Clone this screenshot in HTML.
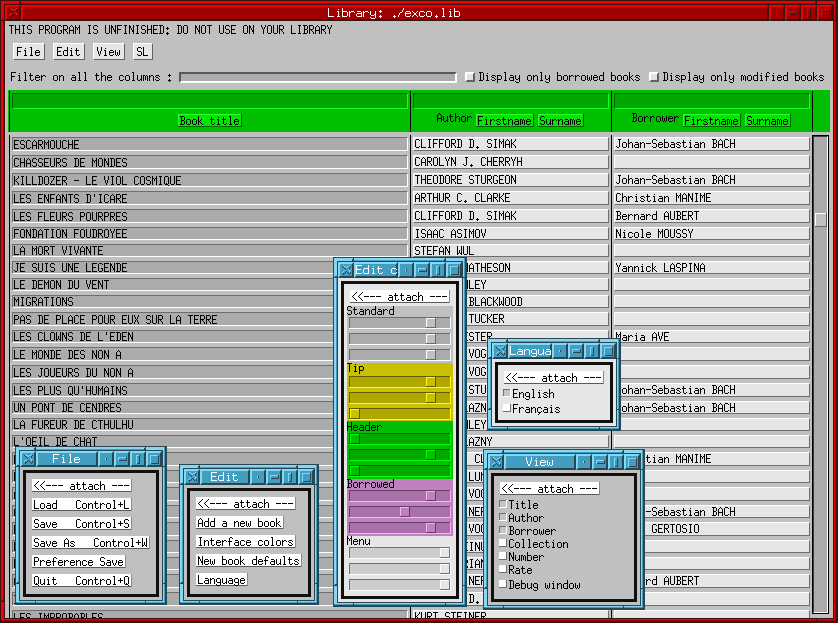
<!DOCTYPE html>
<html lang="en"><head><meta charset="utf-8"><title>Library: ./exco.lib</title>
<style>
html,body{margin:0;padding:0}
body{width:838px;height:623px;overflow:hidden;position:relative;background:#c0c0c0;font-family:"Liberation Mono",monospace}
#root{position:absolute;left:0;top:0;width:838px;height:623px;overflow:hidden}
#root div,#root span,#root svg{position:absolute}
.t{height:13px;font:10px/13px "Liberation Mono",monospace;white-space:pre;overflow:hidden;color:transparent;fill:#000}
.t7{font-size:11.666px}
.t svg{left:0;top:0;shape-rendering:crispEdges}
.w{fill:#fff}
.clip{overflow:hidden}
.win{width:0;height:0}
</style></head>
<body>
<svg width="0" height="0" style="position:absolute"><defs><path id="a39" d="M2 2h1v1h-1zM2 3h1v1h-1zM2 4h1v1h-1z"/><path id="a43" d="M2 4h1v1h-1zM2 5h1v1h-1zM0 6h5v1h-5zM2 7h1v1h-1zM2 8h1v1h-1z"/><path id="a45" d="M0 6h5v1h-5z"/><path id="a46" d="M2 9h1v1h-1zM1 10h3v1h-3zM2 11h1v1h-1z"/><path id="a58" d="M2 4h1v1h-1zM1 5h3v1h-3zM2 6h1v1h-1zM2 9h1v1h-1zM1 10h3v1h-3zM2 11h1v1h-1z"/><path id="a60" d="M4 2h1v1h-1zM3 3h1v1h-1zM2 4h1v1h-1zM1 5h1v1h-1zM0 6h1v1h-1zM1 7h1v1h-1zM2 8h1v1h-1zM3 9h1v1h-1zM4 10h1v1h-1z"/><path id="a65" d="M2 2h1v1h-1zM1 3h1v1h-1zM3 3h1v1h-1zM0 4h1v1h-1zM4 4h1v1h-1zM0 5h1v1h-1zM4 5h1v1h-1zM0 6h1v1h-1zM4 6h1v1h-1zM0 7h5v1h-5zM0 8h1v1h-1zM4 8h1v1h-1zM0 9h1v1h-1zM4 9h1v1h-1zM0 10h1v1h-1zM4 10h1v1h-1z"/><path id="a66" d="M0 2h4v1h-4zM1 3h1v1h-1zM4 3h1v1h-1zM1 4h1v1h-1zM4 4h1v1h-1zM1 5h1v1h-1zM4 5h1v1h-1zM1 6h3v1h-3zM1 7h1v1h-1zM4 7h1v1h-1zM1 8h1v1h-1zM4 8h1v1h-1zM1 9h1v1h-1zM4 9h1v1h-1zM0 10h4v1h-4z"/><path id="a67" d="M1 2h3v1h-3zM0 3h1v1h-1zM4 3h1v1h-1zM0 4h1v1h-1zM0 5h1v1h-1zM0 6h1v1h-1zM0 7h1v1h-1zM0 8h1v1h-1zM0 9h1v1h-1zM4 9h1v1h-1zM1 10h3v1h-3z"/><path id="a68" d="M0 2h4v1h-4zM1 3h1v1h-1zM4 3h1v1h-1zM1 4h1v1h-1zM4 4h1v1h-1zM1 5h1v1h-1zM4 5h1v1h-1zM1 6h1v1h-1zM4 6h1v1h-1zM1 7h1v1h-1zM4 7h1v1h-1zM1 8h1v1h-1zM4 8h1v1h-1zM1 9h1v1h-1zM4 9h1v1h-1zM0 10h4v1h-4z"/><path id="a69" d="M0 2h5v1h-5zM0 3h1v1h-1zM0 4h1v1h-1zM0 5h1v1h-1zM0 6h4v1h-4zM0 7h1v1h-1zM0 8h1v1h-1zM0 9h1v1h-1zM0 10h5v1h-5z"/><path id="a70" d="M0 2h5v1h-5zM0 3h1v1h-1zM0 4h1v1h-1zM0 5h1v1h-1zM0 6h4v1h-4zM0 7h1v1h-1zM0 8h1v1h-1zM0 9h1v1h-1zM0 10h1v1h-1z"/><path id="a71" d="M1 2h3v1h-3zM0 3h1v1h-1zM4 3h1v1h-1zM0 4h1v1h-1zM0 5h1v1h-1zM0 6h1v1h-1zM0 7h1v1h-1zM3 7h2v1h-2zM0 8h1v1h-1zM4 8h1v1h-1zM0 9h1v1h-1zM4 9h1v1h-1zM1 10h3v1h-3z"/><path id="a72" d="M0 2h1v1h-1zM4 2h1v1h-1zM0 3h1v1h-1zM4 3h1v1h-1zM0 4h1v1h-1zM4 4h1v1h-1zM0 5h1v1h-1zM4 5h1v1h-1zM0 6h5v1h-5zM0 7h1v1h-1zM4 7h1v1h-1zM0 8h1v1h-1zM4 8h1v1h-1zM0 9h1v1h-1zM4 9h1v1h-1zM0 10h1v1h-1zM4 10h1v1h-1z"/><path id="a73" d="M1 2h3v1h-3zM2 3h1v1h-1zM2 4h1v1h-1zM2 5h1v1h-1zM2 6h1v1h-1zM2 7h1v1h-1zM2 8h1v1h-1zM2 9h1v1h-1zM1 10h3v1h-3z"/><path id="a74" d="M2 2h3v1h-3zM3 3h1v1h-1zM3 4h1v1h-1zM3 5h1v1h-1zM3 6h1v1h-1zM3 7h1v1h-1zM3 8h1v1h-1zM0 9h1v1h-1zM3 9h1v1h-1zM1 10h2v1h-2z"/><path id="a75" d="M0 2h1v1h-1zM4 2h1v1h-1zM0 3h1v1h-1zM4 3h1v1h-1zM0 4h1v1h-1zM3 4h1v1h-1zM0 5h1v1h-1zM2 5h1v1h-1zM0 6h2v1h-2zM0 7h1v1h-1zM2 7h1v1h-1zM0 8h1v1h-1zM3 8h1v1h-1zM0 9h1v1h-1zM4 9h1v1h-1zM0 10h1v1h-1zM4 10h1v1h-1z"/><path id="a76" d="M0 2h1v1h-1zM0 3h1v1h-1zM0 4h1v1h-1zM0 5h1v1h-1zM0 6h1v1h-1zM0 7h1v1h-1zM0 8h1v1h-1zM0 9h1v1h-1zM0 10h5v1h-5z"/><path id="a77" d="M0 2h1v1h-1zM4 2h1v1h-1zM0 3h1v1h-1zM4 3h1v1h-1zM0 4h2v1h-2zM3 4h2v1h-2zM0 5h1v1h-1zM2 5h1v1h-1zM4 5h1v1h-1zM0 6h1v1h-1zM2 6h1v1h-1zM4 6h1v1h-1zM0 7h1v1h-1zM4 7h1v1h-1zM0 8h1v1h-1zM4 8h1v1h-1zM0 9h1v1h-1zM4 9h1v1h-1zM0 10h1v1h-1zM4 10h1v1h-1z"/><path id="a78" d="M0 2h1v1h-1zM4 2h1v1h-1zM0 3h2v1h-2zM4 3h1v1h-1zM0 4h2v1h-2zM4 4h1v1h-1zM0 5h1v1h-1zM2 5h1v1h-1zM4 5h1v1h-1zM0 6h1v1h-1zM2 6h1v1h-1zM4 6h1v1h-1zM0 7h1v1h-1zM3 7h2v1h-2zM0 8h1v1h-1zM3 8h2v1h-2zM0 9h1v1h-1zM4 9h1v1h-1zM0 10h1v1h-1zM4 10h1v1h-1z"/><path id="a79" d="M1 2h3v1h-3zM0 3h1v1h-1zM4 3h1v1h-1zM0 4h1v1h-1zM4 4h1v1h-1zM0 5h1v1h-1zM4 5h1v1h-1zM0 6h1v1h-1zM4 6h1v1h-1zM0 7h1v1h-1zM4 7h1v1h-1zM0 8h1v1h-1zM4 8h1v1h-1zM0 9h1v1h-1zM4 9h1v1h-1zM1 10h3v1h-3z"/><path id="a80" d="M0 2h4v1h-4zM0 3h1v1h-1zM4 3h1v1h-1zM0 4h1v1h-1zM4 4h1v1h-1zM0 5h1v1h-1zM4 5h1v1h-1zM0 6h4v1h-4zM0 7h1v1h-1zM0 8h1v1h-1zM0 9h1v1h-1zM0 10h1v1h-1z"/><path id="a81" d="M1 2h3v1h-3zM0 3h1v1h-1zM4 3h1v1h-1zM0 4h1v1h-1zM4 4h1v1h-1zM0 5h1v1h-1zM4 5h1v1h-1zM0 6h1v1h-1zM4 6h1v1h-1zM0 7h1v1h-1zM4 7h1v1h-1zM0 8h1v1h-1zM4 8h1v1h-1zM0 9h1v1h-1zM2 9h1v1h-1zM4 9h1v1h-1zM1 10h3v1h-3zM4 11h1v1h-1z"/><path id="a82" d="M0 2h4v1h-4zM0 3h1v1h-1zM4 3h1v1h-1zM0 4h1v1h-1zM4 4h1v1h-1zM0 5h1v1h-1zM4 5h1v1h-1zM0 6h4v1h-4zM0 7h1v1h-1zM2 7h1v1h-1zM0 8h1v1h-1zM3 8h1v1h-1zM0 9h1v1h-1zM4 9h1v1h-1zM0 10h1v1h-1zM4 10h1v1h-1z"/><path id="a83" d="M1 2h3v1h-3zM0 3h1v1h-1zM4 3h1v1h-1zM0 4h1v1h-1zM0 5h1v1h-1zM1 6h3v1h-3zM4 7h1v1h-1zM4 8h1v1h-1zM0 9h1v1h-1zM4 9h1v1h-1zM1 10h3v1h-3z"/><path id="a84" d="M0 2h5v1h-5zM2 3h1v1h-1zM2 4h1v1h-1zM2 5h1v1h-1zM2 6h1v1h-1zM2 7h1v1h-1zM2 8h1v1h-1zM2 9h1v1h-1zM2 10h1v1h-1z"/><path id="a85" d="M0 2h1v1h-1zM4 2h1v1h-1zM0 3h1v1h-1zM4 3h1v1h-1zM0 4h1v1h-1zM4 4h1v1h-1zM0 5h1v1h-1zM4 5h1v1h-1zM0 6h1v1h-1zM4 6h1v1h-1zM0 7h1v1h-1zM4 7h1v1h-1zM0 8h1v1h-1zM4 8h1v1h-1zM0 9h1v1h-1zM4 9h1v1h-1zM1 10h3v1h-3z"/><path id="a86" d="M0 2h1v1h-1zM4 2h1v1h-1zM0 3h1v1h-1zM4 3h1v1h-1zM0 4h1v1h-1zM4 4h1v1h-1zM0 5h1v1h-1zM4 5h1v1h-1zM1 6h1v1h-1zM3 6h1v1h-1zM1 7h1v1h-1zM3 7h1v1h-1zM1 8h1v1h-1zM3 8h1v1h-1zM2 9h1v1h-1zM2 10h1v1h-1z"/><path id="a87" d="M0 2h1v1h-1zM4 2h1v1h-1zM0 3h1v1h-1zM4 3h1v1h-1zM0 4h1v1h-1zM4 4h1v1h-1zM0 5h1v1h-1zM4 5h1v1h-1zM0 6h1v1h-1zM2 6h1v1h-1zM4 6h1v1h-1zM0 7h1v1h-1zM2 7h1v1h-1zM4 7h1v1h-1zM0 8h1v1h-1zM2 8h1v1h-1zM4 8h1v1h-1zM0 9h2v1h-2zM3 9h2v1h-2zM0 10h1v1h-1zM4 10h1v1h-1z"/><path id="a88" d="M0 2h1v1h-1zM4 2h1v1h-1zM0 3h1v1h-1zM4 3h1v1h-1zM1 4h1v1h-1zM3 4h1v1h-1zM1 5h1v1h-1zM3 5h1v1h-1zM2 6h1v1h-1zM1 7h1v1h-1zM3 7h1v1h-1zM1 8h1v1h-1zM3 8h1v1h-1zM0 9h1v1h-1zM4 9h1v1h-1zM0 10h1v1h-1zM4 10h1v1h-1z"/><path id="a89" d="M0 2h1v1h-1zM4 2h1v1h-1zM0 3h1v1h-1zM4 3h1v1h-1zM1 4h1v1h-1zM3 4h1v1h-1zM1 5h1v1h-1zM3 5h1v1h-1zM2 6h1v1h-1zM2 7h1v1h-1zM2 8h1v1h-1zM2 9h1v1h-1zM2 10h1v1h-1z"/><path id="a90" d="M0 2h5v1h-5zM4 3h1v1h-1zM3 4h1v1h-1zM3 5h1v1h-1zM2 6h1v1h-1zM1 7h1v1h-1zM1 8h1v1h-1zM0 9h1v1h-1zM0 10h5v1h-5z"/><path id="a97" d="M1 5h3v1h-3zM4 6h1v1h-1zM1 7h4v1h-4zM0 8h1v1h-1zM4 8h1v1h-1zM0 9h1v1h-1zM4 9h1v1h-1zM1 10h4v1h-4z"/><path id="a98" d="M0 2h1v1h-1zM0 3h1v1h-1zM0 4h1v1h-1zM0 5h4v1h-4zM0 6h1v1h-1zM4 6h1v1h-1zM0 7h1v1h-1zM4 7h1v1h-1zM0 8h1v1h-1zM4 8h1v1h-1zM0 9h1v1h-1zM4 9h1v1h-1zM0 10h4v1h-4z"/><path id="a99" d="M1 5h3v1h-3zM0 6h1v1h-1zM4 6h1v1h-1zM0 7h1v1h-1zM0 8h1v1h-1zM0 9h1v1h-1zM4 9h1v1h-1zM1 10h3v1h-3z"/><path id="a100" d="M4 2h1v1h-1zM4 3h1v1h-1zM4 4h1v1h-1zM1 5h4v1h-4zM0 6h1v1h-1zM4 6h1v1h-1zM0 7h1v1h-1zM4 7h1v1h-1zM0 8h1v1h-1zM4 8h1v1h-1zM0 9h1v1h-1zM4 9h1v1h-1zM1 10h4v1h-4z"/><path id="a101" d="M1 5h3v1h-3zM0 6h1v1h-1zM4 6h1v1h-1zM0 7h5v1h-5zM0 8h1v1h-1zM0 9h1v1h-1zM4 9h1v1h-1zM1 10h3v1h-3z"/><path id="a102" d="M2 2h2v1h-2zM1 3h1v1h-1zM4 3h1v1h-1zM1 4h1v1h-1zM1 5h1v1h-1zM0 6h4v1h-4zM1 7h1v1h-1zM1 8h1v1h-1zM1 9h1v1h-1zM1 10h1v1h-1z"/><path id="a103" d="M1 5h3v1h-3zM0 6h1v1h-1zM4 6h1v1h-1zM0 7h1v1h-1zM4 7h1v1h-1zM0 8h1v1h-1zM4 8h1v1h-1zM1 9h4v1h-4zM4 10h1v1h-1zM0 11h1v1h-1zM4 11h1v1h-1zM1 12h3v1h-3z"/><path id="a104" d="M0 2h1v1h-1zM0 3h1v1h-1zM0 4h1v1h-1zM0 5h1v1h-1zM2 5h2v1h-2zM0 6h2v1h-2zM4 6h1v1h-1zM0 7h1v1h-1zM4 7h1v1h-1zM0 8h1v1h-1zM4 8h1v1h-1zM0 9h1v1h-1zM4 9h1v1h-1zM0 10h1v1h-1zM4 10h1v1h-1z"/><path id="a105" d="M2 3h1v1h-1zM1 5h2v1h-2zM2 6h1v1h-1zM2 7h1v1h-1zM2 8h1v1h-1zM2 9h1v1h-1zM1 10h3v1h-3z"/><path id="a107" d="M0 2h1v1h-1zM0 3h1v1h-1zM0 4h1v1h-1zM0 5h1v1h-1zM3 5h1v1h-1zM0 6h1v1h-1zM2 6h1v1h-1zM0 7h2v1h-2zM0 8h1v1h-1zM2 8h1v1h-1zM0 9h1v1h-1zM3 9h1v1h-1zM0 10h1v1h-1zM4 10h1v1h-1z"/><path id="a108" d="M1 2h2v1h-2zM2 3h1v1h-1zM2 4h1v1h-1zM2 5h1v1h-1zM2 6h1v1h-1zM2 7h1v1h-1zM2 8h1v1h-1zM2 9h1v1h-1zM1 10h3v1h-3z"/><path id="a109" d="M0 5h2v1h-2zM3 5h1v1h-1zM0 6h1v1h-1zM2 6h1v1h-1zM4 6h1v1h-1zM0 7h1v1h-1zM2 7h1v1h-1zM4 7h1v1h-1zM0 8h1v1h-1zM2 8h1v1h-1zM4 8h1v1h-1zM0 9h1v1h-1zM2 9h1v1h-1zM4 9h1v1h-1zM0 10h1v1h-1zM4 10h1v1h-1z"/><path id="a110" d="M0 5h1v1h-1zM2 5h2v1h-2zM0 6h2v1h-2zM4 6h1v1h-1zM0 7h1v1h-1zM4 7h1v1h-1zM0 8h1v1h-1zM4 8h1v1h-1zM0 9h1v1h-1zM4 9h1v1h-1zM0 10h1v1h-1zM4 10h1v1h-1z"/><path id="a111" d="M1 5h3v1h-3zM0 6h1v1h-1zM4 6h1v1h-1zM0 7h1v1h-1zM4 7h1v1h-1zM0 8h1v1h-1zM4 8h1v1h-1zM0 9h1v1h-1zM4 9h1v1h-1zM1 10h3v1h-3z"/><path id="a112" d="M0 5h4v1h-4zM0 6h1v1h-1zM4 6h1v1h-1zM0 7h1v1h-1zM4 7h1v1h-1zM0 8h1v1h-1zM4 8h1v1h-1zM0 9h4v1h-4zM0 10h1v1h-1zM0 11h1v1h-1zM0 12h1v1h-1z"/><path id="a114" d="M0 5h1v1h-1zM2 5h2v1h-2zM0 6h2v1h-2zM4 6h1v1h-1zM0 7h1v1h-1zM0 8h1v1h-1zM0 9h1v1h-1zM0 10h1v1h-1z"/><path id="a115" d="M1 5h3v1h-3zM0 6h1v1h-1zM4 6h1v1h-1zM1 7h2v1h-2zM3 8h1v1h-1zM0 9h1v1h-1zM4 9h1v1h-1zM1 10h3v1h-3z"/><path id="a116" d="M1 3h1v1h-1zM1 4h1v1h-1zM0 5h4v1h-4zM1 6h1v1h-1zM1 7h1v1h-1zM1 8h1v1h-1zM1 9h1v1h-1zM4 9h1v1h-1zM2 10h2v1h-2z"/><path id="a117" d="M0 5h1v1h-1zM4 5h1v1h-1zM0 6h1v1h-1zM4 6h1v1h-1zM0 7h1v1h-1zM4 7h1v1h-1zM0 8h1v1h-1zM4 8h1v1h-1zM0 9h1v1h-1zM3 9h2v1h-2zM1 10h2v1h-2zM4 10h1v1h-1z"/><path id="a118" d="M0 5h1v1h-1zM4 5h1v1h-1zM0 6h1v1h-1zM4 6h1v1h-1zM0 7h1v1h-1zM4 7h1v1h-1zM1 8h1v1h-1zM3 8h1v1h-1zM1 9h1v1h-1zM3 9h1v1h-1zM2 10h1v1h-1z"/><path id="a119" d="M0 5h1v1h-1zM4 5h1v1h-1zM0 6h1v1h-1zM4 6h1v1h-1zM0 7h1v1h-1zM2 7h1v1h-1zM4 7h1v1h-1zM0 8h1v1h-1zM2 8h1v1h-1zM4 8h1v1h-1zM0 9h1v1h-1zM2 9h1v1h-1zM4 9h1v1h-1zM1 10h1v1h-1zM3 10h1v1h-1z"/><path id="a121" d="M0 5h1v1h-1zM4 5h1v1h-1zM0 6h1v1h-1zM4 6h1v1h-1zM0 7h1v1h-1zM4 7h1v1h-1zM0 8h1v1h-1zM3 8h2v1h-2zM1 9h2v1h-2zM4 9h1v1h-1zM4 10h1v1h-1zM0 11h1v1h-1zM4 11h1v1h-1zM1 12h3v1h-3z"/><path id="a231" d="M1 5h3v1h-3zM0 6h1v1h-1zM4 6h1v1h-1zM0 7h1v1h-1zM0 8h1v1h-1zM0 9h1v1h-1zM4 9h1v1h-1zM1 10h3v1h-3zM2 11h1v1h-1zM1 12h1v1h-1z"/><path id="b46" d="M3 9h1v1h-1zM2 10h3v1h-3zM3 11h1v1h-1z"/><path id="b47" d="M5 2h1v1h-1zM5 3h1v1h-1zM4 4h1v1h-1zM4 5h1v1h-1zM2 6h2v1h-2zM1 7h1v1h-1zM1 8h1v1h-1zM0 9h1v1h-1zM0 10h1v1h-1z"/><path id="b58" d="M3 4h1v1h-1zM2 5h3v1h-3zM3 6h1v1h-1zM3 9h1v1h-1zM2 10h3v1h-3zM3 11h1v1h-1z"/><path id="b69" d="M0 2h6v1h-6zM0 3h1v1h-1zM0 4h1v1h-1zM0 5h1v1h-1zM0 6h5v1h-5zM0 7h1v1h-1zM0 8h1v1h-1zM0 9h1v1h-1zM0 10h6v1h-6z"/><path id="b70" d="M0 2h6v1h-6zM0 3h1v1h-1zM0 4h1v1h-1zM0 5h1v1h-1zM0 6h5v1h-5zM0 7h1v1h-1zM0 8h1v1h-1zM0 9h1v1h-1zM0 10h1v1h-1z"/><path id="b76" d="M0 2h1v1h-1zM0 3h1v1h-1zM0 4h1v1h-1zM0 5h1v1h-1zM0 6h1v1h-1zM0 7h1v1h-1zM0 8h1v1h-1zM0 9h1v1h-1zM0 10h6v1h-6z"/><path id="b86" d="M0 2h1v1h-1zM5 2h1v1h-1zM0 3h1v1h-1zM5 3h1v1h-1zM0 4h1v1h-1zM5 4h1v1h-1zM0 5h1v1h-1zM5 5h1v1h-1zM1 6h1v1h-1zM4 6h1v1h-1zM1 7h1v1h-1zM4 7h1v1h-1zM1 8h1v1h-1zM4 8h1v1h-1zM2 9h2v1h-2zM2 10h2v1h-2z"/><path id="b97" d="M1 5h4v1h-4zM5 6h1v1h-1zM1 7h5v1h-5zM0 8h1v1h-1zM5 8h1v1h-1zM0 9h1v1h-1zM5 9h1v1h-1zM1 10h5v1h-5z"/><path id="b98" d="M0 2h1v1h-1zM0 3h1v1h-1zM0 4h1v1h-1zM0 5h5v1h-5zM0 6h1v1h-1zM5 6h1v1h-1zM0 7h1v1h-1zM5 7h1v1h-1zM0 8h1v1h-1zM5 8h1v1h-1zM0 9h1v1h-1zM5 9h1v1h-1zM0 10h5v1h-5z"/><path id="b99" d="M1 5h4v1h-4zM0 6h1v1h-1zM5 6h1v1h-1zM0 7h1v1h-1zM0 8h1v1h-1zM0 9h1v1h-1zM5 9h1v1h-1zM1 10h4v1h-4z"/><path id="b100" d="M5 2h1v1h-1zM5 3h1v1h-1zM5 4h1v1h-1zM1 5h5v1h-5zM0 6h1v1h-1zM5 6h1v1h-1zM0 7h1v1h-1zM5 7h1v1h-1zM0 8h1v1h-1zM5 8h1v1h-1zM0 9h1v1h-1zM5 9h1v1h-1zM1 10h5v1h-5z"/><path id="b101" d="M1 5h4v1h-4zM0 6h1v1h-1zM5 6h1v1h-1zM0 7h6v1h-6zM0 8h1v1h-1zM0 9h1v1h-1zM5 9h1v1h-1zM1 10h4v1h-4z"/><path id="b103" d="M1 5h4v1h-4zM0 6h1v1h-1zM5 6h1v1h-1zM0 7h1v1h-1zM5 7h1v1h-1zM0 8h1v1h-1zM5 8h1v1h-1zM1 9h5v1h-5zM5 10h1v1h-1zM0 11h1v1h-1zM5 11h1v1h-1zM1 12h4v1h-4z"/><path id="b105" d="M3 3h1v1h-1zM2 5h2v1h-2zM3 6h1v1h-1zM3 7h1v1h-1zM3 8h1v1h-1zM3 9h1v1h-1zM2 10h3v1h-3z"/><path id="b108" d="M2 2h2v1h-2zM3 3h1v1h-1zM3 4h1v1h-1zM3 5h1v1h-1zM3 6h1v1h-1zM3 7h1v1h-1zM3 8h1v1h-1zM3 9h1v1h-1zM2 10h3v1h-3z"/><path id="b110" d="M0 5h1v1h-1zM2 5h3v1h-3zM0 6h2v1h-2zM5 6h1v1h-1zM0 7h1v1h-1zM5 7h1v1h-1zM0 8h1v1h-1zM5 8h1v1h-1zM0 9h1v1h-1zM5 9h1v1h-1zM0 10h1v1h-1zM5 10h1v1h-1z"/><path id="b111" d="M1 5h4v1h-4zM0 6h1v1h-1zM5 6h1v1h-1zM0 7h1v1h-1zM5 7h1v1h-1zM0 8h1v1h-1zM5 8h1v1h-1zM0 9h1v1h-1zM5 9h1v1h-1zM1 10h4v1h-4z"/><path id="b114" d="M0 5h1v1h-1zM2 5h3v1h-3zM0 6h2v1h-2zM5 6h1v1h-1zM0 7h1v1h-1zM0 8h1v1h-1zM0 9h1v1h-1zM0 10h1v1h-1z"/><path id="b116" d="M1 3h1v1h-1zM1 4h1v1h-1zM0 5h5v1h-5zM1 6h1v1h-1zM1 7h1v1h-1zM1 8h1v1h-1zM1 9h1v1h-1zM5 9h1v1h-1zM2 10h3v1h-3z"/><path id="b117" d="M0 5h1v1h-1zM5 5h1v1h-1zM0 6h1v1h-1zM5 6h1v1h-1zM0 7h1v1h-1zM5 7h1v1h-1zM0 8h1v1h-1zM5 8h1v1h-1zM0 9h1v1h-1zM4 9h2v1h-2zM1 10h3v1h-3zM5 10h1v1h-1z"/><path id="b119" d="M0 5h1v1h-1zM5 5h1v1h-1zM0 6h1v1h-1zM5 6h1v1h-1zM0 7h1v1h-1zM2 7h1v1h-1zM5 7h1v1h-1zM0 8h1v1h-1zM2 8h1v1h-1zM5 8h1v1h-1zM0 9h1v1h-1zM2 9h1v1h-1zM5 9h1v1h-1zM1 10h1v1h-1zM3 10h2v1h-2z"/><path id="b120" d="M0 5h1v1h-1zM5 5h1v1h-1zM1 6h1v1h-1zM4 6h1v1h-1zM2 7h2v1h-2zM2 8h2v1h-2zM1 9h1v1h-1zM4 9h1v1h-1zM0 10h1v1h-1zM5 10h1v1h-1z"/><path id="b121" d="M0 5h1v1h-1zM5 5h1v1h-1zM0 6h1v1h-1zM5 6h1v1h-1zM0 7h1v1h-1zM5 7h1v1h-1zM0 8h1v1h-1zM4 8h2v1h-2zM1 9h3v1h-3zM5 9h1v1h-1zM5 10h1v1h-1zM0 11h1v1h-1zM5 11h1v1h-1zM1 12h4v1h-4z"/></defs></svg>
<div id="root">
<div style="left:0px;top:0px;width:838px;height:623px;background:#3a1212;"></div><div style="left:1px;top:1px;width:835px;height:620px;background:#a00000;"></div><div style="left:1px;top:1px;width:834px;height:619px;background:#f00000;"></div><div style="left:3px;top:3px;width:831px;height:616px;background:#a00000;"></div><div style="left:4px;top:4px;width:830px;height:615px;background:#3a1212;"></div><div style="left:5px;top:5px;width:828px;height:613px;background:#c0c0c0;"></div><div style="left:3px;top:3px;width:18px;height:1px;background:#f00000;"></div><div style="left:3px;top:3px;width:1px;height:18px;background:#f00000;"></div><div style="left:817px;top:3px;width:17px;height:1px;background:#f00000;"></div><div style="left:3px;top:602px;width:1px;height:17px;background:#f00000;"></div><div style="left:20px;top:1px;width:1px;height:3px;background:#3a1212;"></div><div style="left:816px;top:1px;width:1px;height:3px;background:#3a1212;"></div><div style="left:20px;top:619px;width:1px;height:2px;background:#3a1212;"></div><div style="left:816px;top:619px;width:1px;height:2px;background:#3a1212;"></div><div style="left:1px;top:20px;width:3px;height:1px;background:#3a1212;"></div><div style="left:1px;top:601px;width:3px;height:1px;background:#3a1212;"></div><div style="left:834px;top:20px;width:2px;height:1px;background:#3a1212;"></div><div style="left:834px;top:601px;width:2px;height:1px;background:#3a1212;"></div><div style="left:19px;top:2px;width:1px;height:2px;background:#3a1212;"></div><div style="left:2px;top:19px;width:2px;height:1px;background:#3a1212;"></div><div style="left:2px;top:600px;width:2px;height:1px;background:#3a1212;"></div><div style="left:815px;top:2px;width:1px;height:2px;background:#3a1212;"></div>
<div style="left:5px;top:5px;width:12px;height:12px;background:#a00000;border:2px solid;border-color:#f00000 #3a1212 #3a1212 #f00000;"></div><svg class="ic" style="left:5px;top:5px" width="16" height="16" shape-rendering="crispEdges"><path fill="#f82828" d="M4 10h1v1h-1zM5 3h1v1h-1zM5 9h1v1h-1zM6 4h1v1h-1zM6 8h1v1h-1zM7 4h1v1h-1zM8 5h1v1h-1zM9 4h1v1h-1zM10 4h1v1h-1zM10 7h1v1h-1zM11 3h1v1h-1zM11 8h1v1h-1zM11 9h1v1h-1z"/><path fill="#3a1212" d="M4 4h1v1h-1zM5 5h1v1h-1zM5 11h1v1h-1zM5 12h1v1h-1zM6 6h1v1h-1zM6 11h1v1h-1zM7 7h1v1h-1zM7 10h1v1h-1zM8 9h1v1h-1zM9 10h1v1h-1zM10 11h1v1h-1zM11 5h1v1h-1zM11 6h1v1h-1zM11 12h1v1h-1zM12 4h1v1h-1zM12 10h1v1h-1zM12 11h1v1h-1z"/></svg><div style="left:21px;top:5px;width:744px;height:12px;background:#a00000;border:2px solid;border-color:#f00000 #3a1212 #3a1212 #f00000;"></div><div class="clip" style="left:328px;top:6px;width:133px;height:13px"><span class="t t7 w" style="left:0px;top:0px;width:133px">Library: ./exco.lib<svg width="133" height="13"><use href="#b76" x="0"/><use href="#b105" x="7"/><use href="#b98" x="14"/><use href="#b114" x="21"/><use href="#b97" x="28"/><use href="#b114" x="35"/><use href="#b121" x="42"/><use href="#b58" x="49"/><use href="#b46" x="63"/><use href="#b47" x="70"/><use href="#b101" x="77"/><use href="#b120" x="84"/><use href="#b99" x="91"/><use href="#b111" x="98"/><use href="#b46" x="105"/><use href="#b108" x="112"/><use href="#b105" x="119"/><use href="#b98" x="126"/></svg></span></div><div style="left:769px;top:5px;width:12px;height:12px;background:#a00000;border:2px solid;border-color:#f00000 #3a1212 #3a1212 #f00000;"></div><div style="left:785px;top:5px;width:12px;height:12px;background:#a00000;border:2px solid;border-color:#f00000 #3a1212 #3a1212 #f00000;"></div><div style="left:801px;top:5px;width:12px;height:12px;background:#a00000;border:2px solid;border-color:#f00000 #3a1212 #3a1212 #f00000;"></div><div style="left:817px;top:5px;width:12px;height:12px;background:#a00000;border:2px solid;border-color:#f00000 #3a1212 #3a1212 #f00000;"></div><div style="left:776px;top:12px;width:2px;height:1px;background:#f00000;"></div><div style="left:777px;top:12px;width:1px;height:2px;background:#3a1212;"></div><div style="left:776px;top:13px;width:2px;height:1px;background:#3a1212;"></div><div style="left:776px;top:12px;width:1px;height:2px;background:#f00000;"></div><div style="left:789px;top:11px;width:9px;height:1px;background:#f00000;"></div><div style="left:797px;top:11px;width:1px;height:4px;background:#3a1212;"></div><div style="left:789px;top:14px;width:9px;height:1px;background:#3a1212;"></div><div style="left:789px;top:11px;width:1px;height:4px;background:#f00000;"></div><div style="left:807px;top:9px;width:4px;height:1px;background:#f00000;"></div><div style="left:810px;top:9px;width:1px;height:9px;background:#3a1212;"></div><div style="left:807px;top:17px;width:4px;height:1px;background:#3a1212;"></div><div style="left:807px;top:9px;width:1px;height:9px;background:#f00000;"></div><div style="left:821px;top:9px;width:9px;height:1px;background:#f00000;"></div><div style="left:829px;top:9px;width:1px;height:9px;background:#3a1212;"></div><div style="left:821px;top:17px;width:9px;height:1px;background:#3a1212;"></div><div style="left:821px;top:9px;width:1px;height:9px;background:#f00000;"></div>
<span class="t" style="left:9px;top:23px;width:324px">THIS PROGRAM IS UNFINISHED: DO NOT USE ON YOUR LIBRARY<svg width="324" height="13"><use href="#a84" x="0"/><use href="#a72" x="6"/><use href="#a73" x="12"/><use href="#a83" x="18"/><use href="#a80" x="30"/><use href="#a82" x="36"/><use href="#a79" x="42"/><use href="#a71" x="48"/><use href="#a82" x="54"/><use href="#a65" x="60"/><use href="#a77" x="66"/><use href="#a73" x="78"/><use href="#a83" x="84"/><use href="#a85" x="96"/><use href="#a78" x="102"/><use href="#a70" x="108"/><use href="#a73" x="114"/><use href="#a78" x="120"/><use href="#a73" x="126"/><use href="#a83" x="132"/><use href="#a72" x="138"/><use href="#a69" x="144"/><use href="#a68" x="150"/><use href="#a58" x="156"/><use href="#a68" x="168"/><use href="#a79" x="174"/><use href="#a78" x="186"/><use href="#a79" x="192"/><use href="#a84" x="198"/><use href="#a85" x="210"/><use href="#a83" x="216"/><use href="#a69" x="222"/><use href="#a79" x="234"/><use href="#a78" x="240"/><use href="#a89" x="252"/><use href="#a79" x="258"/><use href="#a85" x="264"/><use href="#a82" x="270"/><use href="#a76" x="282"/><use href="#a73" x="288"/><use href="#a66" x="294"/><use href="#a82" x="300"/><use href="#a65" x="306"/><use href="#a82" x="312"/><use href="#a89" x="318"/></svg></span>
<div style="left:13px;top:43px;width:30px;height:15px;background:#e6e6e6;border:1px solid;border-color:#ffffff #636363 #636363 #ffffff;"></div>
<span class="t" style="left:17px;top:45px;width:24px">File<svg width="24" height="13"><use href="#a70" x="0"/><use href="#a105" x="6"/><use href="#a108" x="12"/><use href="#a101" x="18"/></svg></span>
<div style="left:53px;top:43px;width:30px;height:15px;background:#e6e6e6;border:1px solid;border-color:#ffffff #636363 #636363 #ffffff;"></div>
<span class="t" style="left:57px;top:45px;width:24px">Edit<svg width="24" height="13"><use href="#a69" x="0"/><use href="#a100" x="6"/><use href="#a105" x="12"/><use href="#a116" x="18"/></svg></span>
<div style="left:93px;top:43px;width:30px;height:15px;background:#e6e6e6;border:1px solid;border-color:#ffffff #636363 #636363 #ffffff;"></div>
<span class="t" style="left:97px;top:45px;width:24px">View<svg width="24" height="13"><use href="#a86" x="0"/><use href="#a105" x="6"/><use href="#a101" x="12"/><use href="#a119" x="18"/></svg></span>
<div style="left:133px;top:43px;width:18px;height:15px;background:#e6e6e6;border:1px solid;border-color:#ffffff #636363 #636363 #ffffff;"></div>
<span class="t" style="left:137px;top:45px;width:12px">SL<svg width="12" height="13"><use href="#a83" x="0"/><use href="#a76" x="6"/></svg></span>
<span class="t" style="left:11px;top:70px;width:162px">Filter on all the columns :<svg width="162" height="13"><use href="#a70" x="0"/><use href="#a105" x="6"/><use href="#a108" x="12"/><use href="#a116" x="18"/><use href="#a101" x="24"/><use href="#a114" x="30"/><use href="#a111" x="42"/><use href="#a110" x="48"/><use href="#a97" x="60"/><use href="#a108" x="66"/><use href="#a108" x="72"/><use href="#a116" x="84"/><use href="#a104" x="90"/><use href="#a101" x="96"/><use href="#a99" x="108"/><use href="#a111" x="114"/><use href="#a108" x="120"/><use href="#a117" x="126"/><use href="#a109" x="132"/><use href="#a110" x="138"/><use href="#a115" x="144"/><use href="#a58" x="156"/></svg></span>
<div style="left:179px;top:72px;width:274px;height:7px;background:#acacac;border:2px solid;border-color:#585858 #ffffff #ffffff #585858;"></div>
<div style="left:465px;top:72px;width:6px;height:6px;background:#e2e2e2;border:2px solid;border-color:#ffffff #636363 #636363 #ffffff;"></div>
<span class="t" style="left:479px;top:70px;width:162px">Display only borrowed books<svg width="162" height="13"><use href="#a68" x="0"/><use href="#a105" x="6"/><use href="#a115" x="12"/><use href="#a112" x="18"/><use href="#a108" x="24"/><use href="#a97" x="30"/><use href="#a121" x="36"/><use href="#a111" x="48"/><use href="#a110" x="54"/><use href="#a108" x="60"/><use href="#a121" x="66"/><use href="#a98" x="78"/><use href="#a111" x="84"/><use href="#a114" x="90"/><use href="#a114" x="96"/><use href="#a111" x="102"/><use href="#a119" x="108"/><use href="#a101" x="114"/><use href="#a100" x="120"/><use href="#a98" x="132"/><use href="#a111" x="138"/><use href="#a111" x="144"/><use href="#a107" x="150"/><use href="#a115" x="156"/></svg></span>
<div style="left:649px;top:72px;width:6px;height:6px;background:#e2e2e2;border:2px solid;border-color:#ffffff #636363 #636363 #ffffff;"></div>
<span class="t" style="left:663px;top:70px;width:162px">Display only modified books<svg width="162" height="13"><use href="#a68" x="0"/><use href="#a105" x="6"/><use href="#a115" x="12"/><use href="#a112" x="18"/><use href="#a108" x="24"/><use href="#a97" x="30"/><use href="#a121" x="36"/><use href="#a111" x="48"/><use href="#a110" x="54"/><use href="#a108" x="60"/><use href="#a121" x="66"/><use href="#a109" x="78"/><use href="#a111" x="84"/><use href="#a100" x="90"/><use href="#a105" x="96"/><use href="#a102" x="102"/><use href="#a105" x="108"/><use href="#a101" x="114"/><use href="#a100" x="120"/><use href="#a98" x="132"/><use href="#a111" x="138"/><use href="#a111" x="144"/><use href="#a107" x="150"/><use href="#a115" x="156"/></svg></span>
<div style="left:8px;top:90px;width:822px;height:42px;background:#00be00;"></div>
<div style="left:9px;top:91px;width:1px;height:41px;background:#000;"></div>
<div style="left:410px;top:91px;width:1px;height:41px;background:#000;"></div>
<div style="left:611px;top:91px;width:1px;height:41px;background:#000;"></div>
<div style="left:812px;top:91px;width:1px;height:41px;background:#000;"></div>
<div style="left:12px;top:93px;width:394px;height:14px;background:#00a800;border:1px solid;border-color:#006400 #14ff28 #14ff28 #006400;"></div>
<div style="left:413px;top:93px;width:194px;height:14px;background:#00a800;border:1px solid;border-color:#006400 #14ff28 #14ff28 #006400;"></div>
<div style="left:614px;top:93px;width:194px;height:14px;background:#00a800;border:1px solid;border-color:#006400 #14ff28 #14ff28 #006400;"></div>
<div style="left:178px;top:114px;width:64px;height:13px;background:#00e600;"></div><div style="left:178px;top:114px;width:64px;height:1px;background:#28ff28;"></div><div style="left:178px;top:114px;width:1px;height:13px;background:#28ff28;"></div><div style="left:178px;top:126px;width:64px;height:1px;background:#006400;"></div><div style="left:241px;top:114px;width:1px;height:13px;background:#006400;"></div><span class="t" style="left:180px;top:114px;width:60px">Book title<svg width="60" height="13"><use href="#a66" x="0"/><use href="#a111" x="6"/><use href="#a111" x="12"/><use href="#a107" x="18"/><use href="#a116" x="30"/><use href="#a105" x="36"/><use href="#a116" x="42"/><use href="#a108" x="48"/><use href="#a101" x="54"/></svg></span>
<span class="t" style="left:437px;top:111px;width:36px">Author<svg width="36" height="13"><use href="#a65" x="0"/><use href="#a117" x="6"/><use href="#a116" x="12"/><use href="#a104" x="18"/><use href="#a111" x="24"/><use href="#a114" x="30"/></svg></span>
<div style="left:476px;top:114px;width:58px;height:13px;background:#00e600;"></div><div style="left:476px;top:114px;width:58px;height:1px;background:#28ff28;"></div><div style="left:476px;top:114px;width:1px;height:13px;background:#28ff28;"></div><div style="left:476px;top:126px;width:58px;height:1px;background:#006400;"></div><div style="left:533px;top:114px;width:1px;height:13px;background:#006400;"></div><span class="t" style="left:478px;top:114px;width:54px">Firstname<svg width="54" height="13"><use href="#a70" x="0"/><use href="#a105" x="6"/><use href="#a114" x="12"/><use href="#a115" x="18"/><use href="#a116" x="24"/><use href="#a110" x="30"/><use href="#a97" x="36"/><use href="#a109" x="42"/><use href="#a101" x="48"/></svg></span>
<div style="left:538px;top:114px;width:46px;height:13px;background:#00e600;"></div><div style="left:538px;top:114px;width:46px;height:1px;background:#28ff28;"></div><div style="left:538px;top:114px;width:1px;height:13px;background:#28ff28;"></div><div style="left:538px;top:126px;width:46px;height:1px;background:#006400;"></div><div style="left:583px;top:114px;width:1px;height:13px;background:#006400;"></div><span class="t" style="left:540px;top:114px;width:42px">Surname<svg width="42" height="13"><use href="#a83" x="0"/><use href="#a117" x="6"/><use href="#a114" x="12"/><use href="#a110" x="18"/><use href="#a97" x="24"/><use href="#a109" x="30"/><use href="#a101" x="36"/></svg></span>
<span class="t" style="left:632px;top:111px;width:48px">Borrower<svg width="48" height="13"><use href="#a66" x="0"/><use href="#a111" x="6"/><use href="#a114" x="12"/><use href="#a114" x="18"/><use href="#a111" x="24"/><use href="#a119" x="30"/><use href="#a101" x="36"/><use href="#a114" x="42"/></svg></span>
<div style="left:683px;top:114px;width:58px;height:13px;background:#00e600;"></div><div style="left:683px;top:114px;width:58px;height:1px;background:#28ff28;"></div><div style="left:683px;top:114px;width:1px;height:13px;background:#28ff28;"></div><div style="left:683px;top:126px;width:58px;height:1px;background:#006400;"></div><div style="left:740px;top:114px;width:1px;height:13px;background:#006400;"></div><span class="t" style="left:685px;top:114px;width:54px">Firstname<svg width="54" height="13"><use href="#a70" x="0"/><use href="#a105" x="6"/><use href="#a114" x="12"/><use href="#a115" x="18"/><use href="#a116" x="24"/><use href="#a110" x="30"/><use href="#a97" x="36"/><use href="#a109" x="42"/><use href="#a101" x="48"/></svg></span>
<div style="left:745px;top:114px;width:46px;height:13px;background:#00e600;"></div><div style="left:745px;top:114px;width:46px;height:1px;background:#28ff28;"></div><div style="left:745px;top:114px;width:1px;height:13px;background:#28ff28;"></div><div style="left:745px;top:126px;width:46px;height:1px;background:#006400;"></div><div style="left:790px;top:114px;width:1px;height:13px;background:#006400;"></div><span class="t" style="left:747px;top:114px;width:42px">Surname<svg width="42" height="13"><use href="#a83" x="0"/><use href="#a117" x="6"/><use href="#a114" x="12"/><use href="#a110" x="18"/><use href="#a97" x="24"/><use href="#a109" x="30"/><use href="#a101" x="36"/></svg></span>
<div style="left:9px;top:135px;width:1px;height:483px;background:#000;"></div>
<div style="left:410px;top:135px;width:1px;height:483px;background:#000;"></div>
<div style="left:611px;top:135px;width:1px;height:483px;background:#000;"></div>
<div style="left:12px;top:137px;width:394px;height:12px;background:#ababab;border:1px solid;border-color:#6e6e6e #ffffff #ffffff #6e6e6e;"></div>
<span class="t" style="left:14px;top:138px;width:66px">ESCARMOUCHE<svg width="66" height="13"><use href="#a69" x="0"/><use href="#a83" x="6"/><use href="#a67" x="12"/><use href="#a65" x="18"/><use href="#a82" x="24"/><use href="#a77" x="30"/><use href="#a79" x="36"/><use href="#a85" x="42"/><use href="#a67" x="48"/><use href="#a72" x="54"/><use href="#a69" x="60"/></svg></span>
<div style="left:413px;top:137px;width:194px;height:12px;background:#e6e6e6;border:1px solid;border-color:#ffffff #6e6e6e #6e6e6e #ffffff;"></div>
<span class="t" style="left:415px;top:137px;width:102px">CLIFFORD D. SIMAK<svg width="102" height="13"><use href="#a67" x="0"/><use href="#a76" x="6"/><use href="#a73" x="12"/><use href="#a70" x="18"/><use href="#a70" x="24"/><use href="#a79" x="30"/><use href="#a82" x="36"/><use href="#a68" x="42"/><use href="#a68" x="54"/><use href="#a46" x="60"/><use href="#a83" x="72"/><use href="#a73" x="78"/><use href="#a77" x="84"/><use href="#a65" x="90"/><use href="#a75" x="96"/></svg></span>
<div style="left:614px;top:137px;width:194px;height:12px;background:#e6e6e6;border:1px solid;border-color:#ffffff #6e6e6e #6e6e6e #ffffff;"></div>
<span class="t" style="left:616px;top:137px;width:120px">Johan-Sebastian BACH<svg width="120" height="13"><use href="#a74" x="0"/><use href="#a111" x="6"/><use href="#a104" x="12"/><use href="#a97" x="18"/><use href="#a110" x="24"/><use href="#a45" x="30"/><use href="#a83" x="36"/><use href="#a101" x="42"/><use href="#a98" x="48"/><use href="#a97" x="54"/><use href="#a115" x="60"/><use href="#a116" x="66"/><use href="#a105" x="72"/><use href="#a97" x="78"/><use href="#a110" x="84"/><use href="#a66" x="96"/><use href="#a65" x="102"/><use href="#a67" x="108"/><use href="#a72" x="114"/></svg></span>
<div style="left:12px;top:155px;width:394px;height:12px;background:#ababab;border:1px solid;border-color:#6e6e6e #ffffff #ffffff #6e6e6e;"></div>
<span class="t" style="left:14px;top:156px;width:114px">CHASSEURS DE MONDES<svg width="114" height="13"><use href="#a67" x="0"/><use href="#a72" x="6"/><use href="#a65" x="12"/><use href="#a83" x="18"/><use href="#a83" x="24"/><use href="#a69" x="30"/><use href="#a85" x="36"/><use href="#a82" x="42"/><use href="#a83" x="48"/><use href="#a68" x="60"/><use href="#a69" x="66"/><use href="#a77" x="78"/><use href="#a79" x="84"/><use href="#a78" x="90"/><use href="#a68" x="96"/><use href="#a69" x="102"/><use href="#a83" x="108"/></svg></span>
<div style="left:413px;top:155px;width:194px;height:12px;background:#e6e6e6;border:1px solid;border-color:#ffffff #6e6e6e #6e6e6e #ffffff;"></div>
<span class="t" style="left:415px;top:155px;width:108px">CAROLYN J. CHERRYH<svg width="108" height="13"><use href="#a67" x="0"/><use href="#a65" x="6"/><use href="#a82" x="12"/><use href="#a79" x="18"/><use href="#a76" x="24"/><use href="#a89" x="30"/><use href="#a78" x="36"/><use href="#a74" x="48"/><use href="#a46" x="54"/><use href="#a67" x="66"/><use href="#a72" x="72"/><use href="#a69" x="78"/><use href="#a82" x="84"/><use href="#a82" x="90"/><use href="#a89" x="96"/><use href="#a72" x="102"/></svg></span>
<div style="left:614px;top:155px;width:194px;height:12px;background:#e6e6e6;border:1px solid;border-color:#ffffff #6e6e6e #6e6e6e #ffffff;"></div>
<div style="left:12px;top:173px;width:394px;height:12px;background:#ababab;border:1px solid;border-color:#6e6e6e #ffffff #ffffff #6e6e6e;"></div>
<span class="t" style="left:14px;top:174px;width:168px">KILLDOZER - LE VIOL COSMIQUE<svg width="168" height="13"><use href="#a75" x="0"/><use href="#a73" x="6"/><use href="#a76" x="12"/><use href="#a76" x="18"/><use href="#a68" x="24"/><use href="#a79" x="30"/><use href="#a90" x="36"/><use href="#a69" x="42"/><use href="#a82" x="48"/><use href="#a45" x="60"/><use href="#a76" x="72"/><use href="#a69" x="78"/><use href="#a86" x="90"/><use href="#a73" x="96"/><use href="#a79" x="102"/><use href="#a76" x="108"/><use href="#a67" x="120"/><use href="#a79" x="126"/><use href="#a83" x="132"/><use href="#a77" x="138"/><use href="#a73" x="144"/><use href="#a81" x="150"/><use href="#a85" x="156"/><use href="#a69" x="162"/></svg></span>
<div style="left:413px;top:173px;width:194px;height:12px;background:#e6e6e6;border:1px solid;border-color:#ffffff #6e6e6e #6e6e6e #ffffff;"></div>
<span class="t" style="left:415px;top:173px;width:102px">THEODORE STURGEON<svg width="102" height="13"><use href="#a84" x="0"/><use href="#a72" x="6"/><use href="#a69" x="12"/><use href="#a79" x="18"/><use href="#a68" x="24"/><use href="#a79" x="30"/><use href="#a82" x="36"/><use href="#a69" x="42"/><use href="#a83" x="54"/><use href="#a84" x="60"/><use href="#a85" x="66"/><use href="#a82" x="72"/><use href="#a71" x="78"/><use href="#a69" x="84"/><use href="#a79" x="90"/><use href="#a78" x="96"/></svg></span>
<div style="left:614px;top:173px;width:194px;height:12px;background:#e6e6e6;border:1px solid;border-color:#ffffff #6e6e6e #6e6e6e #ffffff;"></div>
<span class="t" style="left:616px;top:173px;width:120px">Johan-Sebastian BACH<svg width="120" height="13"><use href="#a74" x="0"/><use href="#a111" x="6"/><use href="#a104" x="12"/><use href="#a97" x="18"/><use href="#a110" x="24"/><use href="#a45" x="30"/><use href="#a83" x="36"/><use href="#a101" x="42"/><use href="#a98" x="48"/><use href="#a97" x="54"/><use href="#a115" x="60"/><use href="#a116" x="66"/><use href="#a105" x="72"/><use href="#a97" x="78"/><use href="#a110" x="84"/><use href="#a66" x="96"/><use href="#a65" x="102"/><use href="#a67" x="108"/><use href="#a72" x="114"/></svg></span>
<div style="left:12px;top:191px;width:394px;height:12px;background:#ababab;border:1px solid;border-color:#6e6e6e #ffffff #ffffff #6e6e6e;"></div>
<span class="t" style="left:14px;top:192px;width:114px">LES ENFANTS D'ICARE<svg width="114" height="13"><use href="#a76" x="0"/><use href="#a69" x="6"/><use href="#a83" x="12"/><use href="#a69" x="24"/><use href="#a78" x="30"/><use href="#a70" x="36"/><use href="#a65" x="42"/><use href="#a78" x="48"/><use href="#a84" x="54"/><use href="#a83" x="60"/><use href="#a68" x="72"/><use href="#a39" x="78"/><use href="#a73" x="84"/><use href="#a67" x="90"/><use href="#a65" x="96"/><use href="#a82" x="102"/><use href="#a69" x="108"/></svg></span>
<div style="left:413px;top:191px;width:194px;height:12px;background:#e6e6e6;border:1px solid;border-color:#ffffff #6e6e6e #6e6e6e #ffffff;"></div>
<span class="t" style="left:415px;top:191px;width:96px">ARTHUR C. CLARKE<svg width="96" height="13"><use href="#a65" x="0"/><use href="#a82" x="6"/><use href="#a84" x="12"/><use href="#a72" x="18"/><use href="#a85" x="24"/><use href="#a82" x="30"/><use href="#a67" x="42"/><use href="#a46" x="48"/><use href="#a67" x="60"/><use href="#a76" x="66"/><use href="#a65" x="72"/><use href="#a82" x="78"/><use href="#a75" x="84"/><use href="#a69" x="90"/></svg></span>
<div style="left:614px;top:191px;width:194px;height:12px;background:#e6e6e6;border:1px solid;border-color:#ffffff #6e6e6e #6e6e6e #ffffff;"></div>
<span class="t" style="left:616px;top:191px;width:96px">Christian MANIME<svg width="96" height="13"><use href="#a67" x="0"/><use href="#a104" x="6"/><use href="#a114" x="12"/><use href="#a105" x="18"/><use href="#a115" x="24"/><use href="#a116" x="30"/><use href="#a105" x="36"/><use href="#a97" x="42"/><use href="#a110" x="48"/><use href="#a77" x="60"/><use href="#a65" x="66"/><use href="#a78" x="72"/><use href="#a73" x="78"/><use href="#a77" x="84"/><use href="#a69" x="90"/></svg></span>
<div style="left:12px;top:209px;width:394px;height:12px;background:#ababab;border:1px solid;border-color:#6e6e6e #ffffff #ffffff #6e6e6e;"></div>
<span class="t" style="left:14px;top:210px;width:114px">LES FLEURS POURPRES<svg width="114" height="13"><use href="#a76" x="0"/><use href="#a69" x="6"/><use href="#a83" x="12"/><use href="#a70" x="24"/><use href="#a76" x="30"/><use href="#a69" x="36"/><use href="#a85" x="42"/><use href="#a82" x="48"/><use href="#a83" x="54"/><use href="#a80" x="66"/><use href="#a79" x="72"/><use href="#a85" x="78"/><use href="#a82" x="84"/><use href="#a80" x="90"/><use href="#a82" x="96"/><use href="#a69" x="102"/><use href="#a83" x="108"/></svg></span>
<div style="left:413px;top:209px;width:194px;height:12px;background:#e6e6e6;border:1px solid;border-color:#ffffff #6e6e6e #6e6e6e #ffffff;"></div>
<span class="t" style="left:415px;top:209px;width:102px">CLIFFORD D. SIMAK<svg width="102" height="13"><use href="#a67" x="0"/><use href="#a76" x="6"/><use href="#a73" x="12"/><use href="#a70" x="18"/><use href="#a70" x="24"/><use href="#a79" x="30"/><use href="#a82" x="36"/><use href="#a68" x="42"/><use href="#a68" x="54"/><use href="#a46" x="60"/><use href="#a83" x="72"/><use href="#a73" x="78"/><use href="#a77" x="84"/><use href="#a65" x="90"/><use href="#a75" x="96"/></svg></span>
<div style="left:614px;top:209px;width:194px;height:12px;background:#e6e6e6;border:1px solid;border-color:#ffffff #6e6e6e #6e6e6e #ffffff;"></div>
<span class="t" style="left:616px;top:209px;width:84px">Bernard AUBERT<svg width="84" height="13"><use href="#a66" x="0"/><use href="#a101" x="6"/><use href="#a114" x="12"/><use href="#a110" x="18"/><use href="#a97" x="24"/><use href="#a114" x="30"/><use href="#a100" x="36"/><use href="#a65" x="48"/><use href="#a85" x="54"/><use href="#a66" x="60"/><use href="#a69" x="66"/><use href="#a82" x="72"/><use href="#a84" x="78"/></svg></span>
<div style="left:12px;top:227px;width:394px;height:11px;background:#ababab;border:1px solid;border-color:#6e6e6e #ffffff #ffffff #6e6e6e;"></div>
<span class="t" style="left:14px;top:227px;width:114px">FONDATION FOUDROYEE<svg width="114" height="13"><use href="#a70" x="0"/><use href="#a79" x="6"/><use href="#a78" x="12"/><use href="#a68" x="18"/><use href="#a65" x="24"/><use href="#a84" x="30"/><use href="#a73" x="36"/><use href="#a79" x="42"/><use href="#a78" x="48"/><use href="#a70" x="60"/><use href="#a79" x="66"/><use href="#a85" x="72"/><use href="#a68" x="78"/><use href="#a82" x="84"/><use href="#a79" x="90"/><use href="#a89" x="96"/><use href="#a69" x="102"/><use href="#a69" x="108"/></svg></span>
<div style="left:413px;top:227px;width:194px;height:11px;background:#e6e6e6;border:1px solid;border-color:#ffffff #6e6e6e #6e6e6e #ffffff;"></div>
<span class="t" style="left:415px;top:227px;width:72px">ISAAC ASIMOV<svg width="72" height="13"><use href="#a73" x="0"/><use href="#a83" x="6"/><use href="#a65" x="12"/><use href="#a65" x="18"/><use href="#a67" x="24"/><use href="#a65" x="36"/><use href="#a83" x="42"/><use href="#a73" x="48"/><use href="#a77" x="54"/><use href="#a79" x="60"/><use href="#a86" x="66"/></svg></span>
<div style="left:614px;top:227px;width:194px;height:11px;background:#e6e6e6;border:1px solid;border-color:#ffffff #6e6e6e #6e6e6e #ffffff;"></div>
<span class="t" style="left:616px;top:227px;width:78px">Nicole MOUSSY<svg width="78" height="13"><use href="#a78" x="0"/><use href="#a105" x="6"/><use href="#a99" x="12"/><use href="#a111" x="18"/><use href="#a108" x="24"/><use href="#a101" x="30"/><use href="#a77" x="42"/><use href="#a79" x="48"/><use href="#a85" x="54"/><use href="#a83" x="60"/><use href="#a83" x="66"/><use href="#a89" x="72"/></svg></span>
<div style="left:12px;top:244px;width:394px;height:11px;background:#ababab;border:1px solid;border-color:#6e6e6e #ffffff #ffffff #6e6e6e;"></div>
<span class="t" style="left:14px;top:244px;width:90px">LA MORT VIVANTE<svg width="90" height="13"><use href="#a76" x="0"/><use href="#a65" x="6"/><use href="#a77" x="18"/><use href="#a79" x="24"/><use href="#a82" x="30"/><use href="#a84" x="36"/><use href="#a86" x="48"/><use href="#a73" x="54"/><use href="#a86" x="60"/><use href="#a65" x="66"/><use href="#a78" x="72"/><use href="#a84" x="78"/><use href="#a69" x="84"/></svg></span>
<div style="left:413px;top:244px;width:194px;height:11px;background:#e6e6e6;border:1px solid;border-color:#ffffff #6e6e6e #6e6e6e #ffffff;"></div>
<span class="t" style="left:415px;top:244px;width:60px">STEFAN WUL<svg width="60" height="13"><use href="#a83" x="0"/><use href="#a84" x="6"/><use href="#a69" x="12"/><use href="#a70" x="18"/><use href="#a65" x="24"/><use href="#a78" x="30"/><use href="#a87" x="42"/><use href="#a85" x="48"/><use href="#a76" x="54"/></svg></span>
<div style="left:614px;top:244px;width:194px;height:11px;background:#e6e6e6;border:1px solid;border-color:#ffffff #6e6e6e #6e6e6e #ffffff;"></div>
<div style="left:12px;top:261px;width:394px;height:11px;background:#ababab;border:1px solid;border-color:#6e6e6e #ffffff #ffffff #6e6e6e;"></div>
<span class="t" style="left:14px;top:261px;width:114px">JE SUIS UNE LEGENDE<svg width="114" height="13"><use href="#a74" x="0"/><use href="#a69" x="6"/><use href="#a83" x="18"/><use href="#a85" x="24"/><use href="#a73" x="30"/><use href="#a83" x="36"/><use href="#a85" x="48"/><use href="#a78" x="54"/><use href="#a69" x="60"/><use href="#a76" x="72"/><use href="#a69" x="78"/><use href="#a71" x="84"/><use href="#a69" x="90"/><use href="#a78" x="96"/><use href="#a68" x="102"/><use href="#a69" x="108"/></svg></span>
<div style="left:413px;top:261px;width:194px;height:11px;background:#e6e6e6;border:1px solid;border-color:#ffffff #6e6e6e #6e6e6e #ffffff;"></div>
<span class="t" style="left:415px;top:261px;width:96px">RICHARD MATHESON<svg width="96" height="13"><use href="#a82" x="0"/><use href="#a73" x="6"/><use href="#a67" x="12"/><use href="#a72" x="18"/><use href="#a65" x="24"/><use href="#a82" x="30"/><use href="#a68" x="36"/><use href="#a77" x="48"/><use href="#a65" x="54"/><use href="#a84" x="60"/><use href="#a72" x="66"/><use href="#a69" x="72"/><use href="#a83" x="78"/><use href="#a79" x="84"/><use href="#a78" x="90"/></svg></span>
<div style="left:614px;top:261px;width:194px;height:11px;background:#e6e6e6;border:1px solid;border-color:#ffffff #6e6e6e #6e6e6e #ffffff;"></div>
<span class="t" style="left:616px;top:261px;width:90px">Yannick LASPINA<svg width="90" height="13"><use href="#a89" x="0"/><use href="#a97" x="6"/><use href="#a110" x="12"/><use href="#a110" x="18"/><use href="#a105" x="24"/><use href="#a99" x="30"/><use href="#a107" x="36"/><use href="#a76" x="48"/><use href="#a65" x="54"/><use href="#a83" x="60"/><use href="#a80" x="66"/><use href="#a73" x="72"/><use href="#a78" x="78"/><use href="#a65" x="84"/></svg></span>
<div style="left:12px;top:278px;width:394px;height:11px;background:#ababab;border:1px solid;border-color:#6e6e6e #ffffff #ffffff #6e6e6e;"></div>
<span class="t" style="left:14px;top:278px;width:96px">LE DEMON DU VENT<svg width="96" height="13"><use href="#a76" x="0"/><use href="#a69" x="6"/><use href="#a68" x="18"/><use href="#a69" x="24"/><use href="#a77" x="30"/><use href="#a79" x="36"/><use href="#a78" x="42"/><use href="#a68" x="54"/><use href="#a85" x="60"/><use href="#a86" x="72"/><use href="#a69" x="78"/><use href="#a78" x="84"/><use href="#a84" x="90"/></svg></span>
<div style="left:413px;top:278px;width:194px;height:11px;background:#e6e6e6;border:1px solid;border-color:#ffffff #6e6e6e #6e6e6e #ffffff;"></div>
<span class="t" style="left:415px;top:278px;width:72px">BRIAN LUMLEY<svg width="72" height="13"><use href="#a66" x="0"/><use href="#a82" x="6"/><use href="#a73" x="12"/><use href="#a65" x="18"/><use href="#a78" x="24"/><use href="#a76" x="36"/><use href="#a85" x="42"/><use href="#a77" x="48"/><use href="#a76" x="54"/><use href="#a69" x="60"/><use href="#a89" x="66"/></svg></span>
<div style="left:614px;top:278px;width:194px;height:11px;background:#e6e6e6;border:1px solid;border-color:#ffffff #6e6e6e #6e6e6e #ffffff;"></div>
<div style="left:12px;top:295px;width:394px;height:11px;background:#ababab;border:1px solid;border-color:#6e6e6e #ffffff #ffffff #6e6e6e;"></div>
<span class="t" style="left:14px;top:295px;width:60px">MIGRATIONS<svg width="60" height="13"><use href="#a77" x="0"/><use href="#a73" x="6"/><use href="#a71" x="12"/><use href="#a82" x="18"/><use href="#a65" x="24"/><use href="#a84" x="30"/><use href="#a73" x="36"/><use href="#a79" x="42"/><use href="#a78" x="48"/><use href="#a83" x="54"/></svg></span>
<div style="left:413px;top:295px;width:194px;height:11px;background:#e6e6e6;border:1px solid;border-color:#ffffff #6e6e6e #6e6e6e #ffffff;"></div>
<span class="t" style="left:415px;top:295px;width:108px">ALGERNON BLACKWOOD<svg width="108" height="13"><use href="#a65" x="0"/><use href="#a76" x="6"/><use href="#a71" x="12"/><use href="#a69" x="18"/><use href="#a82" x="24"/><use href="#a78" x="30"/><use href="#a79" x="36"/><use href="#a78" x="42"/><use href="#a66" x="54"/><use href="#a76" x="60"/><use href="#a65" x="66"/><use href="#a67" x="72"/><use href="#a75" x="78"/><use href="#a87" x="84"/><use href="#a79" x="90"/><use href="#a79" x="96"/><use href="#a68" x="102"/></svg></span>
<div style="left:614px;top:295px;width:194px;height:11px;background:#e6e6e6;border:1px solid;border-color:#ffffff #6e6e6e #6e6e6e #ffffff;"></div>
<div style="left:12px;top:312px;width:394px;height:12px;background:#ababab;border:1px solid;border-color:#6e6e6e #ffffff #ffffff #6e6e6e;"></div>
<span class="t" style="left:14px;top:313px;width:204px">PAS DE PLACE POUR EUX SUR LA TERRE<svg width="204" height="13"><use href="#a80" x="0"/><use href="#a65" x="6"/><use href="#a83" x="12"/><use href="#a68" x="24"/><use href="#a69" x="30"/><use href="#a80" x="42"/><use href="#a76" x="48"/><use href="#a65" x="54"/><use href="#a67" x="60"/><use href="#a69" x="66"/><use href="#a80" x="78"/><use href="#a79" x="84"/><use href="#a85" x="90"/><use href="#a82" x="96"/><use href="#a69" x="108"/><use href="#a85" x="114"/><use href="#a88" x="120"/><use href="#a83" x="132"/><use href="#a85" x="138"/><use href="#a82" x="144"/><use href="#a76" x="156"/><use href="#a65" x="162"/><use href="#a84" x="174"/><use href="#a69" x="180"/><use href="#a82" x="186"/><use href="#a82" x="192"/><use href="#a69" x="198"/></svg></span>
<div style="left:413px;top:312px;width:194px;height:12px;background:#e6e6e6;border:1px solid;border-color:#ffffff #6e6e6e #6e6e6e #ffffff;"></div>
<span class="t" style="left:415px;top:312px;width:90px">A WILSON TUCKER<svg width="90" height="13"><use href="#a65" x="0"/><use href="#a87" x="12"/><use href="#a73" x="18"/><use href="#a76" x="24"/><use href="#a83" x="30"/><use href="#a79" x="36"/><use href="#a78" x="42"/><use href="#a84" x="54"/><use href="#a85" x="60"/><use href="#a67" x="66"/><use href="#a75" x="72"/><use href="#a69" x="78"/><use href="#a82" x="84"/></svg></span>
<div style="left:614px;top:312px;width:194px;height:12px;background:#e6e6e6;border:1px solid;border-color:#ffffff #6e6e6e #6e6e6e #ffffff;"></div>
<div style="left:12px;top:330px;width:394px;height:11px;background:#ababab;border:1px solid;border-color:#6e6e6e #ffffff #ffffff #6e6e6e;"></div>
<span class="t" style="left:14px;top:330px;width:120px">LES CLOWNS DE L'EDEN<svg width="120" height="13"><use href="#a76" x="0"/><use href="#a69" x="6"/><use href="#a83" x="12"/><use href="#a67" x="24"/><use href="#a76" x="30"/><use href="#a79" x="36"/><use href="#a87" x="42"/><use href="#a78" x="48"/><use href="#a83" x="54"/><use href="#a68" x="66"/><use href="#a69" x="72"/><use href="#a76" x="84"/><use href="#a39" x="90"/><use href="#a69" x="96"/><use href="#a68" x="102"/><use href="#a69" x="108"/><use href="#a78" x="114"/></svg></span>
<div style="left:413px;top:330px;width:194px;height:11px;background:#e6e6e6;border:1px solid;border-color:#ffffff #6e6e6e #6e6e6e #ffffff;"></div>
<span class="t" style="left:415px;top:330px;width:78px">ALFRED BESTER<svg width="78" height="13"><use href="#a65" x="0"/><use href="#a76" x="6"/><use href="#a70" x="12"/><use href="#a82" x="18"/><use href="#a69" x="24"/><use href="#a68" x="30"/><use href="#a66" x="42"/><use href="#a69" x="48"/><use href="#a83" x="54"/><use href="#a84" x="60"/><use href="#a69" x="66"/><use href="#a82" x="72"/></svg></span>
<div style="left:614px;top:330px;width:194px;height:11px;background:#e6e6e6;border:1px solid;border-color:#ffffff #6e6e6e #6e6e6e #ffffff;"></div>
<span class="t" style="left:616px;top:330px;width:54px">Maria AVE<svg width="54" height="13"><use href="#a77" x="0"/><use href="#a97" x="6"/><use href="#a114" x="12"/><use href="#a105" x="18"/><use href="#a97" x="24"/><use href="#a65" x="36"/><use href="#a86" x="42"/><use href="#a69" x="48"/></svg></span>
<div style="left:12px;top:347px;width:394px;height:12px;background:#ababab;border:1px solid;border-color:#6e6e6e #ffffff #ffffff #6e6e6e;"></div>
<span class="t" style="left:14px;top:348px;width:108px">LE MONDE DES NON A<svg width="108" height="13"><use href="#a76" x="0"/><use href="#a69" x="6"/><use href="#a77" x="18"/><use href="#a79" x="24"/><use href="#a78" x="30"/><use href="#a68" x="36"/><use href="#a69" x="42"/><use href="#a68" x="54"/><use href="#a69" x="60"/><use href="#a83" x="66"/><use href="#a78" x="78"/><use href="#a79" x="84"/><use href="#a78" x="90"/><use href="#a65" x="102"/></svg></span>
<div style="left:413px;top:347px;width:194px;height:12px;background:#e6e6e6;border:1px solid;border-color:#ffffff #6e6e6e #6e6e6e #ffffff;"></div>
<span class="t" style="left:415px;top:347px;width:78px">A.E. VAN VOGT<svg width="78" height="13"><use href="#a65" x="0"/><use href="#a46" x="6"/><use href="#a69" x="12"/><use href="#a46" x="18"/><use href="#a86" x="30"/><use href="#a65" x="36"/><use href="#a78" x="42"/><use href="#a86" x="54"/><use href="#a79" x="60"/><use href="#a71" x="66"/><use href="#a84" x="72"/></svg></span>
<div style="left:614px;top:347px;width:194px;height:12px;background:#e6e6e6;border:1px solid;border-color:#ffffff #6e6e6e #6e6e6e #ffffff;"></div>
<div style="left:12px;top:365px;width:394px;height:12px;background:#ababab;border:1px solid;border-color:#6e6e6e #ffffff #ffffff #6e6e6e;"></div>
<span class="t" style="left:14px;top:366px;width:120px">LES JOUEURS DU NON A<svg width="120" height="13"><use href="#a76" x="0"/><use href="#a69" x="6"/><use href="#a83" x="12"/><use href="#a74" x="24"/><use href="#a79" x="30"/><use href="#a85" x="36"/><use href="#a69" x="42"/><use href="#a85" x="48"/><use href="#a82" x="54"/><use href="#a83" x="60"/><use href="#a68" x="72"/><use href="#a85" x="78"/><use href="#a78" x="90"/><use href="#a79" x="96"/><use href="#a78" x="102"/><use href="#a65" x="114"/></svg></span>
<div style="left:413px;top:365px;width:194px;height:12px;background:#e6e6e6;border:1px solid;border-color:#ffffff #6e6e6e #6e6e6e #ffffff;"></div>
<span class="t" style="left:415px;top:365px;width:78px">A.E. VAN VOGT<svg width="78" height="13"><use href="#a65" x="0"/><use href="#a46" x="6"/><use href="#a69" x="12"/><use href="#a46" x="18"/><use href="#a86" x="30"/><use href="#a65" x="36"/><use href="#a78" x="42"/><use href="#a86" x="54"/><use href="#a79" x="60"/><use href="#a71" x="66"/><use href="#a84" x="72"/></svg></span>
<div style="left:614px;top:365px;width:194px;height:12px;background:#e6e6e6;border:1px solid;border-color:#ffffff #6e6e6e #6e6e6e #ffffff;"></div>
<div style="left:12px;top:383px;width:394px;height:12px;background:#ababab;border:1px solid;border-color:#6e6e6e #ffffff #ffffff #6e6e6e;"></div>
<span class="t" style="left:14px;top:384px;width:114px">LES PLUS QU'HUMAINS<svg width="114" height="13"><use href="#a76" x="0"/><use href="#a69" x="6"/><use href="#a83" x="12"/><use href="#a80" x="24"/><use href="#a76" x="30"/><use href="#a85" x="36"/><use href="#a83" x="42"/><use href="#a81" x="54"/><use href="#a85" x="60"/><use href="#a39" x="66"/><use href="#a72" x="72"/><use href="#a85" x="78"/><use href="#a77" x="84"/><use href="#a65" x="90"/><use href="#a73" x="96"/><use href="#a78" x="102"/><use href="#a83" x="108"/></svg></span>
<div style="left:413px;top:383px;width:194px;height:12px;background:#e6e6e6;border:1px solid;border-color:#ffffff #6e6e6e #6e6e6e #ffffff;"></div>
<span class="t" style="left:415px;top:383px;width:102px">THEODORE STURGEON<svg width="102" height="13"><use href="#a84" x="0"/><use href="#a72" x="6"/><use href="#a69" x="12"/><use href="#a79" x="18"/><use href="#a68" x="24"/><use href="#a79" x="30"/><use href="#a82" x="36"/><use href="#a69" x="42"/><use href="#a83" x="54"/><use href="#a84" x="60"/><use href="#a85" x="66"/><use href="#a82" x="72"/><use href="#a71" x="78"/><use href="#a69" x="84"/><use href="#a79" x="90"/><use href="#a78" x="96"/></svg></span>
<div style="left:614px;top:383px;width:194px;height:12px;background:#e6e6e6;border:1px solid;border-color:#ffffff #6e6e6e #6e6e6e #ffffff;"></div>
<span class="t" style="left:616px;top:383px;width:120px">Johan-Sebastian BACH<svg width="120" height="13"><use href="#a74" x="0"/><use href="#a111" x="6"/><use href="#a104" x="12"/><use href="#a97" x="18"/><use href="#a110" x="24"/><use href="#a45" x="30"/><use href="#a83" x="36"/><use href="#a101" x="42"/><use href="#a98" x="48"/><use href="#a97" x="54"/><use href="#a115" x="60"/><use href="#a116" x="66"/><use href="#a105" x="72"/><use href="#a97" x="78"/><use href="#a110" x="84"/><use href="#a66" x="96"/><use href="#a65" x="102"/><use href="#a67" x="108"/><use href="#a72" x="114"/></svg></span>
<div style="left:12px;top:401px;width:394px;height:11px;background:#ababab;border:1px solid;border-color:#6e6e6e #ffffff #ffffff #6e6e6e;"></div>
<span class="t" style="left:14px;top:401px;width:108px">UN PONT DE CENDRES<svg width="108" height="13"><use href="#a85" x="0"/><use href="#a78" x="6"/><use href="#a80" x="18"/><use href="#a79" x="24"/><use href="#a78" x="30"/><use href="#a84" x="36"/><use href="#a68" x="48"/><use href="#a69" x="54"/><use href="#a67" x="66"/><use href="#a69" x="72"/><use href="#a78" x="78"/><use href="#a68" x="84"/><use href="#a82" x="90"/><use href="#a69" x="96"/><use href="#a83" x="102"/></svg></span>
<div style="left:413px;top:401px;width:194px;height:11px;background:#e6e6e6;border:1px solid;border-color:#ffffff #6e6e6e #6e6e6e #ffffff;"></div>
<span class="t" style="left:415px;top:401px;width:78px">ROGER ZELAZNY<svg width="78" height="13"><use href="#a82" x="0"/><use href="#a79" x="6"/><use href="#a71" x="12"/><use href="#a69" x="18"/><use href="#a82" x="24"/><use href="#a90" x="36"/><use href="#a69" x="42"/><use href="#a76" x="48"/><use href="#a65" x="54"/><use href="#a90" x="60"/><use href="#a78" x="66"/><use href="#a89" x="72"/></svg></span>
<div style="left:614px;top:401px;width:194px;height:11px;background:#e6e6e6;border:1px solid;border-color:#ffffff #6e6e6e #6e6e6e #ffffff;"></div>
<span class="t" style="left:616px;top:401px;width:120px">Johan-Sebastian BACH<svg width="120" height="13"><use href="#a74" x="0"/><use href="#a111" x="6"/><use href="#a104" x="12"/><use href="#a97" x="18"/><use href="#a110" x="24"/><use href="#a45" x="30"/><use href="#a83" x="36"/><use href="#a101" x="42"/><use href="#a98" x="48"/><use href="#a97" x="54"/><use href="#a115" x="60"/><use href="#a116" x="66"/><use href="#a105" x="72"/><use href="#a97" x="78"/><use href="#a110" x="84"/><use href="#a66" x="96"/><use href="#a65" x="102"/><use href="#a67" x="108"/><use href="#a72" x="114"/></svg></span>
<div style="left:12px;top:418px;width:394px;height:11px;background:#ababab;border:1px solid;border-color:#6e6e6e #ffffff #ffffff #6e6e6e;"></div>
<span class="t" style="left:14px;top:418px;width:120px">LA FUREUR DE CTHULHU<svg width="120" height="13"><use href="#a76" x="0"/><use href="#a65" x="6"/><use href="#a70" x="18"/><use href="#a85" x="24"/><use href="#a82" x="30"/><use href="#a69" x="36"/><use href="#a85" x="42"/><use href="#a82" x="48"/><use href="#a68" x="60"/><use href="#a69" x="66"/><use href="#a67" x="78"/><use href="#a84" x="84"/><use href="#a72" x="90"/><use href="#a85" x="96"/><use href="#a76" x="102"/><use href="#a72" x="108"/><use href="#a85" x="114"/></svg></span>
<div style="left:413px;top:418px;width:194px;height:11px;background:#e6e6e6;border:1px solid;border-color:#ffffff #6e6e6e #6e6e6e #ffffff;"></div>
<span class="t" style="left:415px;top:418px;width:72px">BRIAN LUMLEY<svg width="72" height="13"><use href="#a66" x="0"/><use href="#a82" x="6"/><use href="#a73" x="12"/><use href="#a65" x="18"/><use href="#a78" x="24"/><use href="#a76" x="36"/><use href="#a85" x="42"/><use href="#a77" x="48"/><use href="#a76" x="54"/><use href="#a69" x="60"/><use href="#a89" x="66"/></svg></span>
<div style="left:614px;top:418px;width:194px;height:11px;background:#e6e6e6;border:1px solid;border-color:#ffffff #6e6e6e #6e6e6e #ffffff;"></div>
<div style="left:12px;top:435px;width:394px;height:11px;background:#ababab;border:1px solid;border-color:#6e6e6e #ffffff #ffffff #6e6e6e;"></div>
<span class="t" style="left:14px;top:435px;width:84px">L'OEIL DE CHAT<svg width="84" height="13"><use href="#a76" x="0"/><use href="#a39" x="6"/><use href="#a79" x="12"/><use href="#a69" x="18"/><use href="#a73" x="24"/><use href="#a76" x="30"/><use href="#a68" x="42"/><use href="#a69" x="48"/><use href="#a67" x="60"/><use href="#a72" x="66"/><use href="#a65" x="72"/><use href="#a84" x="78"/></svg></span>
<div style="left:413px;top:435px;width:194px;height:11px;background:#e6e6e6;border:1px solid;border-color:#ffffff #6e6e6e #6e6e6e #ffffff;"></div>
<span class="t" style="left:415px;top:435px;width:78px">ROGER ZELAZNY<svg width="78" height="13"><use href="#a82" x="0"/><use href="#a79" x="6"/><use href="#a71" x="12"/><use href="#a69" x="18"/><use href="#a82" x="24"/><use href="#a90" x="36"/><use href="#a69" x="42"/><use href="#a76" x="48"/><use href="#a65" x="54"/><use href="#a90" x="60"/><use href="#a78" x="66"/><use href="#a89" x="72"/></svg></span>
<div style="left:614px;top:435px;width:194px;height:11px;background:#e6e6e6;border:1px solid;border-color:#ffffff #6e6e6e #6e6e6e #ffffff;"></div>
<div style="left:12px;top:452px;width:394px;height:12px;background:#ababab;border:1px solid;border-color:#6e6e6e #ffffff #ffffff #6e6e6e;"></div>
<span class="t" style="left:14px;top:453px;width:126px">RENDEZ-VOUS AVEC RAMA<svg width="126" height="13"><use href="#a82" x="0"/><use href="#a69" x="6"/><use href="#a78" x="12"/><use href="#a68" x="18"/><use href="#a69" x="24"/><use href="#a90" x="30"/><use href="#a45" x="36"/><use href="#a86" x="42"/><use href="#a79" x="48"/><use href="#a85" x="54"/><use href="#a83" x="60"/><use href="#a65" x="72"/><use href="#a86" x="78"/><use href="#a69" x="84"/><use href="#a67" x="90"/><use href="#a82" x="102"/><use href="#a65" x="108"/><use href="#a77" x="114"/><use href="#a65" x="120"/></svg></span>
<div style="left:413px;top:452px;width:194px;height:12px;background:#e6e6e6;border:1px solid;border-color:#ffffff #6e6e6e #6e6e6e #ffffff;"></div>
<span class="t" style="left:415px;top:452px;width:96px">ARTHUR C. CLARKE<svg width="96" height="13"><use href="#a65" x="0"/><use href="#a82" x="6"/><use href="#a84" x="12"/><use href="#a72" x="18"/><use href="#a85" x="24"/><use href="#a82" x="30"/><use href="#a67" x="42"/><use href="#a46" x="48"/><use href="#a67" x="60"/><use href="#a76" x="66"/><use href="#a65" x="72"/><use href="#a82" x="78"/><use href="#a75" x="84"/><use href="#a69" x="90"/></svg></span>
<div style="left:614px;top:452px;width:194px;height:12px;background:#e6e6e6;border:1px solid;border-color:#ffffff #6e6e6e #6e6e6e #ffffff;"></div>
<span class="t" style="left:616px;top:452px;width:96px">Christian MANIME<svg width="96" height="13"><use href="#a67" x="0"/><use href="#a104" x="6"/><use href="#a114" x="12"/><use href="#a105" x="18"/><use href="#a115" x="24"/><use href="#a116" x="30"/><use href="#a105" x="36"/><use href="#a97" x="42"/><use href="#a110" x="48"/><use href="#a77" x="60"/><use href="#a65" x="66"/><use href="#a78" x="72"/><use href="#a73" x="78"/><use href="#a77" x="84"/><use href="#a69" x="90"/></svg></span>
<div style="left:12px;top:470px;width:394px;height:11px;background:#ababab;border:1px solid;border-color:#6e6e6e #ffffff #ffffff #6e6e6e;"></div>
<span class="t" style="left:14px;top:470px;width:120px">LE REVEIL DE CTHULHU<svg width="120" height="13"><use href="#a76" x="0"/><use href="#a69" x="6"/><use href="#a82" x="18"/><use href="#a69" x="24"/><use href="#a86" x="30"/><use href="#a69" x="36"/><use href="#a73" x="42"/><use href="#a76" x="48"/><use href="#a68" x="60"/><use href="#a69" x="66"/><use href="#a67" x="78"/><use href="#a84" x="84"/><use href="#a72" x="90"/><use href="#a85" x="96"/><use href="#a76" x="102"/><use href="#a72" x="108"/><use href="#a85" x="114"/></svg></span>
<div style="left:413px;top:470px;width:194px;height:11px;background:#e6e6e6;border:1px solid;border-color:#ffffff #6e6e6e #6e6e6e #ffffff;"></div>
<span class="t" style="left:415px;top:470px;width:90px">BRIAN W. LUMLEY<svg width="90" height="13"><use href="#a66" x="0"/><use href="#a82" x="6"/><use href="#a73" x="12"/><use href="#a65" x="18"/><use href="#a78" x="24"/><use href="#a87" x="36"/><use href="#a46" x="42"/><use href="#a76" x="54"/><use href="#a85" x="60"/><use href="#a77" x="66"/><use href="#a76" x="72"/><use href="#a69" x="78"/><use href="#a89" x="84"/></svg></span>
<div style="left:614px;top:470px;width:194px;height:11px;background:#e6e6e6;border:1px solid;border-color:#ffffff #6e6e6e #6e6e6e #ffffff;"></div>
<div style="left:12px;top:487px;width:394px;height:12px;background:#ababab;border:1px solid;border-color:#6e6e6e #ffffff #ffffff #6e6e6e;"></div>
<span class="t" style="left:14px;top:488px;width:144px">A LA POURSUITE DES SLANS<svg width="144" height="13"><use href="#a65" x="0"/><use href="#a76" x="12"/><use href="#a65" x="18"/><use href="#a80" x="30"/><use href="#a79" x="36"/><use href="#a85" x="42"/><use href="#a82" x="48"/><use href="#a83" x="54"/><use href="#a85" x="60"/><use href="#a73" x="66"/><use href="#a84" x="72"/><use href="#a69" x="78"/><use href="#a68" x="90"/><use href="#a69" x="96"/><use href="#a83" x="102"/><use href="#a83" x="114"/><use href="#a76" x="120"/><use href="#a65" x="126"/><use href="#a78" x="132"/><use href="#a83" x="138"/></svg></span>
<div style="left:413px;top:487px;width:194px;height:12px;background:#e6e6e6;border:1px solid;border-color:#ffffff #6e6e6e #6e6e6e #ffffff;"></div>
<span class="t" style="left:415px;top:487px;width:78px">A.E. VAN VOGT<svg width="78" height="13"><use href="#a65" x="0"/><use href="#a46" x="6"/><use href="#a69" x="12"/><use href="#a46" x="18"/><use href="#a86" x="30"/><use href="#a65" x="36"/><use href="#a78" x="42"/><use href="#a86" x="54"/><use href="#a79" x="60"/><use href="#a71" x="66"/><use href="#a84" x="72"/></svg></span>
<div style="left:614px;top:487px;width:194px;height:12px;background:#e6e6e6;border:1px solid;border-color:#ffffff #6e6e6e #6e6e6e #ffffff;"></div>
<div style="left:12px;top:505px;width:394px;height:11px;background:#ababab;border:1px solid;border-color:#6e6e6e #ffffff #ffffff #6e6e6e;"></div>
<span class="t" style="left:14px;top:505px;width:102px">AUX ARMES D'ORTOG<svg width="102" height="13"><use href="#a65" x="0"/><use href="#a85" x="6"/><use href="#a88" x="12"/><use href="#a65" x="24"/><use href="#a82" x="30"/><use href="#a77" x="36"/><use href="#a69" x="42"/><use href="#a83" x="48"/><use href="#a68" x="60"/><use href="#a39" x="66"/><use href="#a79" x="72"/><use href="#a82" x="78"/><use href="#a84" x="84"/><use href="#a79" x="90"/><use href="#a71" x="96"/></svg></span>
<div style="left:413px;top:505px;width:194px;height:11px;background:#e6e6e6;border:1px solid;border-color:#ffffff #6e6e6e #6e6e6e #ffffff;"></div>
<span class="t" style="left:415px;top:505px;width:72px">KURT STEINER<svg width="72" height="13"><use href="#a75" x="0"/><use href="#a85" x="6"/><use href="#a82" x="12"/><use href="#a84" x="18"/><use href="#a83" x="30"/><use href="#a84" x="36"/><use href="#a69" x="42"/><use href="#a73" x="48"/><use href="#a78" x="54"/><use href="#a69" x="60"/><use href="#a82" x="66"/></svg></span>
<div style="left:614px;top:505px;width:194px;height:11px;background:#e6e6e6;border:1px solid;border-color:#ffffff #6e6e6e #6e6e6e #ffffff;"></div>
<span class="t" style="left:616px;top:505px;width:120px">Johan-Sebastian BACH<svg width="120" height="13"><use href="#a74" x="0"/><use href="#a111" x="6"/><use href="#a104" x="12"/><use href="#a97" x="18"/><use href="#a110" x="24"/><use href="#a45" x="30"/><use href="#a83" x="36"/><use href="#a101" x="42"/><use href="#a98" x="48"/><use href="#a97" x="54"/><use href="#a115" x="60"/><use href="#a116" x="66"/><use href="#a105" x="72"/><use href="#a97" x="78"/><use href="#a110" x="84"/><use href="#a66" x="96"/><use href="#a65" x="102"/><use href="#a67" x="108"/><use href="#a72" x="114"/></svg></span>
<div style="left:12px;top:522px;width:394px;height:12px;background:#ababab;border:1px solid;border-color:#6e6e6e #ffffff #ffffff #6e6e6e;"></div>
<span class="t" style="left:14px;top:523px;width:120px">LA FAUNE DE L'ESPACE<svg width="120" height="13"><use href="#a76" x="0"/><use href="#a65" x="6"/><use href="#a70" x="18"/><use href="#a65" x="24"/><use href="#a85" x="30"/><use href="#a78" x="36"/><use href="#a69" x="42"/><use href="#a68" x="54"/><use href="#a69" x="60"/><use href="#a76" x="72"/><use href="#a39" x="78"/><use href="#a69" x="84"/><use href="#a83" x="90"/><use href="#a80" x="96"/><use href="#a65" x="102"/><use href="#a67" x="108"/><use href="#a69" x="114"/></svg></span>
<div style="left:413px;top:522px;width:194px;height:12px;background:#e6e6e6;border:1px solid;border-color:#ffffff #6e6e6e #6e6e6e #ffffff;"></div>
<span class="t" style="left:415px;top:522px;width:78px">A.E. VAN VOGT<svg width="78" height="13"><use href="#a65" x="0"/><use href="#a46" x="6"/><use href="#a69" x="12"/><use href="#a46" x="18"/><use href="#a86" x="30"/><use href="#a65" x="36"/><use href="#a78" x="42"/><use href="#a86" x="54"/><use href="#a79" x="60"/><use href="#a71" x="66"/><use href="#a84" x="72"/></svg></span>
<div style="left:614px;top:522px;width:194px;height:12px;background:#e6e6e6;border:1px solid;border-color:#ffffff #6e6e6e #6e6e6e #ffffff;"></div>
<span class="t" style="left:616px;top:522px;width:84px">Alain GERTOSIO<svg width="84" height="13"><use href="#a65" x="0"/><use href="#a108" x="6"/><use href="#a97" x="12"/><use href="#a105" x="18"/><use href="#a110" x="24"/><use href="#a71" x="36"/><use href="#a69" x="42"/><use href="#a82" x="48"/><use href="#a84" x="54"/><use href="#a79" x="60"/><use href="#a83" x="66"/><use href="#a73" x="72"/><use href="#a79" x="78"/></svg></span>
<div style="left:12px;top:540px;width:394px;height:11px;background:#ababab;border:1px solid;border-color:#6e6e6e #ffffff #ffffff #6e6e6e;"></div>
<span class="t" style="left:14px;top:540px;width:108px">LE TEMPS INCERTAIN<svg width="108" height="13"><use href="#a76" x="0"/><use href="#a69" x="6"/><use href="#a84" x="18"/><use href="#a69" x="24"/><use href="#a77" x="30"/><use href="#a80" x="36"/><use href="#a83" x="42"/><use href="#a73" x="54"/><use href="#a78" x="60"/><use href="#a67" x="66"/><use href="#a69" x="72"/><use href="#a82" x="78"/><use href="#a84" x="84"/><use href="#a65" x="90"/><use href="#a73" x="96"/><use href="#a78" x="102"/></svg></span>
<div style="left:413px;top:540px;width:194px;height:11px;background:#e6e6e6;border:1px solid;border-color:#ffffff #6e6e6e #6e6e6e #ffffff;"></div>
<span class="t" style="left:415px;top:540px;width:84px">MICHEL JEINURY<svg width="84" height="13"><use href="#a77" x="0"/><use href="#a73" x="6"/><use href="#a67" x="12"/><use href="#a72" x="18"/><use href="#a69" x="24"/><use href="#a76" x="30"/><use href="#a74" x="42"/><use href="#a69" x="48"/><use href="#a73" x="54"/><use href="#a78" x="60"/><use href="#a85" x="66"/><use href="#a82" x="72"/><use href="#a89" x="78"/></svg></span>
<div style="left:614px;top:540px;width:194px;height:11px;background:#e6e6e6;border:1px solid;border-color:#ffffff #6e6e6e #6e6e6e #ffffff;"></div>
<div style="left:12px;top:557px;width:394px;height:11px;background:#ababab;border:1px solid;border-color:#6e6e6e #ffffff #ffffff #6e6e6e;"></div>
<span class="t" style="left:14px;top:557px;width:108px">LES HOMMES MARQUES<svg width="108" height="13"><use href="#a76" x="0"/><use href="#a69" x="6"/><use href="#a83" x="12"/><use href="#a72" x="24"/><use href="#a79" x="30"/><use href="#a77" x="36"/><use href="#a77" x="42"/><use href="#a69" x="48"/><use href="#a83" x="54"/><use href="#a77" x="66"/><use href="#a65" x="72"/><use href="#a82" x="78"/><use href="#a81" x="84"/><use href="#a85" x="90"/><use href="#a69" x="96"/><use href="#a83" x="102"/></svg></span>
<div style="left:413px;top:557px;width:194px;height:11px;background:#e6e6e6;border:1px solid;border-color:#ffffff #6e6e6e #6e6e6e #ffffff;"></div>
<span class="t" style="left:415px;top:557px;width:72px">ALAIN ADRIAN<svg width="72" height="13"><use href="#a65" x="0"/><use href="#a76" x="6"/><use href="#a65" x="12"/><use href="#a73" x="18"/><use href="#a78" x="24"/><use href="#a65" x="36"/><use href="#a68" x="42"/><use href="#a82" x="48"/><use href="#a73" x="54"/><use href="#a65" x="60"/><use href="#a78" x="66"/></svg></span>
<div style="left:614px;top:557px;width:194px;height:11px;background:#e6e6e6;border:1px solid;border-color:#ffffff #6e6e6e #6e6e6e #ffffff;"></div>
<div style="left:12px;top:574px;width:394px;height:12px;background:#ababab;border:1px solid;border-color:#6e6e6e #ffffff #ffffff #6e6e6e;"></div>
<span class="t" style="left:14px;top:575px;width:126px">ORTOG ET LES TENEBRES<svg width="126" height="13"><use href="#a79" x="0"/><use href="#a82" x="6"/><use href="#a84" x="12"/><use href="#a79" x="18"/><use href="#a71" x="24"/><use href="#a69" x="36"/><use href="#a84" x="42"/><use href="#a76" x="54"/><use href="#a69" x="60"/><use href="#a83" x="66"/><use href="#a84" x="78"/><use href="#a69" x="84"/><use href="#a78" x="90"/><use href="#a69" x="96"/><use href="#a66" x="102"/><use href="#a82" x="108"/><use href="#a69" x="114"/><use href="#a83" x="120"/></svg></span>
<div style="left:413px;top:574px;width:194px;height:12px;background:#e6e6e6;border:1px solid;border-color:#ffffff #6e6e6e #6e6e6e #ffffff;"></div>
<span class="t" style="left:415px;top:574px;width:72px">KURT STEINER<svg width="72" height="13"><use href="#a75" x="0"/><use href="#a85" x="6"/><use href="#a82" x="12"/><use href="#a84" x="18"/><use href="#a83" x="30"/><use href="#a84" x="36"/><use href="#a69" x="42"/><use href="#a73" x="48"/><use href="#a78" x="54"/><use href="#a69" x="60"/><use href="#a82" x="66"/></svg></span>
<div style="left:614px;top:574px;width:194px;height:12px;background:#e6e6e6;border:1px solid;border-color:#ffffff #6e6e6e #6e6e6e #ffffff;"></div>
<span class="t" style="left:616px;top:574px;width:84px">Bernard AUBERT<svg width="84" height="13"><use href="#a66" x="0"/><use href="#a101" x="6"/><use href="#a114" x="12"/><use href="#a110" x="18"/><use href="#a97" x="24"/><use href="#a114" x="30"/><use href="#a100" x="36"/><use href="#a65" x="48"/><use href="#a85" x="54"/><use href="#a66" x="60"/><use href="#a69" x="66"/><use href="#a82" x="72"/><use href="#a84" x="78"/></svg></span>
<div style="left:12px;top:592px;width:394px;height:12px;background:#ababab;border:1px solid;border-color:#6e6e6e #ffffff #ffffff #6e6e6e;"></div>
<span class="t" style="left:14px;top:593px;width:102px">DEMAIN LES CHIENS<svg width="102" height="13"><use href="#a68" x="0"/><use href="#a69" x="6"/><use href="#a77" x="12"/><use href="#a65" x="18"/><use href="#a73" x="24"/><use href="#a78" x="30"/><use href="#a76" x="42"/><use href="#a69" x="48"/><use href="#a83" x="54"/><use href="#a67" x="66"/><use href="#a72" x="72"/><use href="#a73" x="78"/><use href="#a69" x="84"/><use href="#a78" x="90"/><use href="#a83" x="96"/></svg></span>
<div style="left:413px;top:592px;width:194px;height:12px;background:#e6e6e6;border:1px solid;border-color:#ffffff #6e6e6e #6e6e6e #ffffff;"></div>
<span class="t" style="left:415px;top:592px;width:102px">CLIFFORD D. SIMAK<svg width="102" height="13"><use href="#a67" x="0"/><use href="#a76" x="6"/><use href="#a73" x="12"/><use href="#a70" x="18"/><use href="#a70" x="24"/><use href="#a79" x="30"/><use href="#a82" x="36"/><use href="#a68" x="42"/><use href="#a68" x="54"/><use href="#a46" x="60"/><use href="#a83" x="72"/><use href="#a73" x="78"/><use href="#a77" x="84"/><use href="#a65" x="90"/><use href="#a75" x="96"/></svg></span>
<div style="left:614px;top:592px;width:194px;height:12px;background:#e6e6e6;border:1px solid;border-color:#ffffff #6e6e6e #6e6e6e #ffffff;"></div>
<div style="left:12px;top:610px;width:394px;height:12px;background:#ababab;border:1px solid;border-color:#6e6e6e #ffffff #ffffff #6e6e6e;"></div>
<span class="t" style="left:14px;top:611px;width:90px">LES IMPROBABLES<svg width="90" height="13"><use href="#a76" x="0"/><use href="#a69" x="6"/><use href="#a83" x="12"/><use href="#a73" x="24"/><use href="#a77" x="30"/><use href="#a80" x="36"/><use href="#a82" x="42"/><use href="#a79" x="48"/><use href="#a66" x="54"/><use href="#a65" x="60"/><use href="#a66" x="66"/><use href="#a76" x="72"/><use href="#a69" x="78"/><use href="#a83" x="84"/></svg></span>
<div style="left:413px;top:610px;width:194px;height:12px;background:#e6e6e6;border:1px solid;border-color:#ffffff #6e6e6e #6e6e6e #ffffff;"></div>
<span class="t" style="left:415px;top:610px;width:72px">KURT STEINER<svg width="72" height="13"><use href="#a75" x="0"/><use href="#a85" x="6"/><use href="#a82" x="12"/><use href="#a84" x="18"/><use href="#a83" x="30"/><use href="#a84" x="36"/><use href="#a69" x="42"/><use href="#a73" x="48"/><use href="#a78" x="54"/><use href="#a69" x="60"/><use href="#a82" x="66"/></svg></span>
<div style="left:614px;top:610px;width:194px;height:12px;background:#e6e6e6;border:1px solid;border-color:#ffffff #6e6e6e #6e6e6e #ffffff;"></div>
<div style="left:812px;top:135px;width:17px;height:479px;background:#000;"></div>
<div style="left:813px;top:136px;width:15px;height:477px;background:#ababab;border:1px solid;border-color:#3c3c3c #fff #fff #3c3c3c;box-sizing:border-box;"></div>
<div style="left:815px;top:213px;width:12px;height:14px;background:#c0c0c0;"></div><div style="left:815px;top:213px;width:12px;height:1px;background:#fff;"></div><div style="left:815px;top:213px;width:1px;height:14px;background:#fff;"></div><div style="left:815px;top:226px;width:12px;height:1px;background:#636363;"></div><div style="left:826px;top:213px;width:1px;height:14px;background:#636363;"></div>
<div style="left:4px;top:618px;width:830px;height:1px;background:#3a1212;"></div><div style="left:1px;top:619px;width:834px;height:1px;background:#f00000;"></div><div style="left:1px;top:620px;width:835px;height:1px;background:#a00000;"></div><div style="left:0px;top:621px;width:838px;height:2px;background:#3a1212;"></div>
<div style="left:816px;top:619px;width:1px;height:2px;background:#3a1212;"></div><div style="left:20px;top:619px;width:1px;height:2px;background:#3a1212;"></div>
<div class="win" style="left:0;top:0"><div style="left:15px;top:446px;width:152px;height:159px;background:#2a4652;"></div><div style="left:16px;top:447px;width:149px;height:156px;background:#429ec0;"></div><div style="left:16px;top:447px;width:148px;height:155px;background:#84d8f4;"></div><div style="left:18px;top:449px;width:145px;height:152px;background:#429ec0;"></div><div style="left:19px;top:450px;width:144px;height:151px;background:#2a4652;"></div><div style="left:20px;top:451px;width:142px;height:149px;background:#c0c0c0;"></div><div style="left:18px;top:449px;width:18px;height:1px;background:#84d8f4;"></div><div style="left:18px;top:449px;width:1px;height:18px;background:#84d8f4;"></div><div style="left:146px;top:449px;width:17px;height:1px;background:#84d8f4;"></div><div style="left:18px;top:584px;width:1px;height:17px;background:#84d8f4;"></div><div style="left:35px;top:447px;width:1px;height:3px;background:#2a4652;"></div><div style="left:145px;top:447px;width:1px;height:3px;background:#2a4652;"></div><div style="left:35px;top:601px;width:1px;height:2px;background:#2a4652;"></div><div style="left:145px;top:601px;width:1px;height:2px;background:#2a4652;"></div><div style="left:16px;top:466px;width:3px;height:1px;background:#2a4652;"></div><div style="left:16px;top:583px;width:3px;height:1px;background:#2a4652;"></div><div style="left:163px;top:466px;width:2px;height:1px;background:#2a4652;"></div><div style="left:163px;top:583px;width:2px;height:1px;background:#2a4652;"></div><div style="left:34px;top:448px;width:1px;height:2px;background:#2a4652;"></div><div style="left:17px;top:465px;width:2px;height:1px;background:#2a4652;"></div><div style="left:17px;top:582px;width:2px;height:1px;background:#2a4652;"></div><div style="left:144px;top:448px;width:1px;height:2px;background:#2a4652;"></div><div style="left:20px;top:451px;width:12px;height:12px;background:#429ec0;border:2px solid;border-color:#84d8f4 #2a4652 #2a4652 #84d8f4;"></div><svg class="ic" style="left:20px;top:451px" width="16" height="16" shape-rendering="crispEdges"><path fill="#84d8f4" d="M4 10h1v1h-1zM5 3h1v1h-1zM5 9h1v1h-1zM6 4h1v1h-1zM6 8h1v1h-1zM7 4h1v1h-1zM8 5h1v1h-1zM9 4h1v1h-1zM10 4h1v1h-1zM10 7h1v1h-1zM11 3h1v1h-1zM11 8h1v1h-1zM11 9h1v1h-1z"/><path fill="#2a4652" d="M4 4h1v1h-1zM5 5h1v1h-1zM5 11h1v1h-1zM5 12h1v1h-1zM6 6h1v1h-1zM6 11h1v1h-1zM7 7h1v1h-1zM7 10h1v1h-1zM8 9h1v1h-1zM9 10h1v1h-1zM10 11h1v1h-1zM11 5h1v1h-1zM11 6h1v1h-1zM11 12h1v1h-1zM12 4h1v1h-1zM12 10h1v1h-1zM12 11h1v1h-1z"/></svg><div style="left:36px;top:451px;width:58px;height:12px;background:#429ec0;border:2px solid;border-color:#84d8f4 #2a4652 #2a4652 #84d8f4;"></div><div class="clip" style="left:53px;top:452px;width:28px;height:13px"><span class="t t7 w" style="left:0px;top:0px;width:28px">File<svg width="28" height="13"><use href="#b70" x="0"/><use href="#b105" x="7"/><use href="#b108" x="14"/><use href="#b101" x="21"/></svg></span></div><div style="left:98px;top:451px;width:12px;height:12px;background:#429ec0;border:2px solid;border-color:#84d8f4 #2a4652 #2a4652 #84d8f4;"></div><div style="left:114px;top:451px;width:12px;height:12px;background:#429ec0;border:2px solid;border-color:#84d8f4 #2a4652 #2a4652 #84d8f4;"></div><div style="left:130px;top:451px;width:12px;height:12px;background:#429ec0;border:2px solid;border-color:#84d8f4 #2a4652 #2a4652 #84d8f4;"></div><div style="left:146px;top:451px;width:12px;height:12px;background:#429ec0;border:2px solid;border-color:#84d8f4 #2a4652 #2a4652 #84d8f4;"></div><div style="left:105px;top:458px;width:2px;height:1px;background:#84d8f4;"></div><div style="left:106px;top:458px;width:1px;height:2px;background:#2a4652;"></div><div style="left:105px;top:459px;width:2px;height:1px;background:#2a4652;"></div><div style="left:105px;top:458px;width:1px;height:2px;background:#84d8f4;"></div><div style="left:118px;top:457px;width:9px;height:1px;background:#84d8f4;"></div><div style="left:126px;top:457px;width:1px;height:4px;background:#2a4652;"></div><div style="left:118px;top:460px;width:9px;height:1px;background:#2a4652;"></div><div style="left:118px;top:457px;width:1px;height:4px;background:#84d8f4;"></div><div style="left:136px;top:455px;width:4px;height:1px;background:#84d8f4;"></div><div style="left:139px;top:455px;width:1px;height:9px;background:#2a4652;"></div><div style="left:136px;top:463px;width:4px;height:1px;background:#2a4652;"></div><div style="left:136px;top:455px;width:1px;height:9px;background:#84d8f4;"></div><div style="left:150px;top:455px;width:9px;height:1px;background:#84d8f4;"></div><div style="left:158px;top:455px;width:1px;height:9px;background:#2a4652;"></div><div style="left:150px;top:463px;width:9px;height:1px;background:#2a4652;"></div><div style="left:150px;top:455px;width:1px;height:9px;background:#84d8f4;"></div><div style="left:20px;top:467px;width:142px;height:133px;background:#c0c0c0;"></div><div style="left:23px;top:470px;width:130px;height:121px;border:3px solid #101010;"></div><div style="left:32px;top:479px;width:100px;height:13px;background:#fff;"></div><div style="left:32px;top:491px;width:100px;height:1px;background:#5a5a5a;"></div><div style="left:131px;top:479px;width:1px;height:13px;background:#8a8a8a;"></div><span class="t" style="left:34px;top:479px;width:96px">&lt;&lt;--- attach ---<svg width="96" height="13"><use href="#a60" x="0"/><use href="#a60" x="6"/><use href="#a45" x="12"/><use href="#a45" x="18"/><use href="#a45" x="24"/><use href="#a97" x="36"/><use href="#a116" x="42"/><use href="#a116" x="48"/><use href="#a97" x="54"/><use href="#a99" x="60"/><use href="#a104" x="66"/><use href="#a45" x="78"/><use href="#a45" x="84"/><use href="#a45" x="90"/></svg></span><div style="left:32px;top:498px;width:100px;height:13px;background:#fff;"></div><div style="left:32px;top:510px;width:100px;height:1px;background:#5a5a5a;"></div><div style="left:131px;top:498px;width:1px;height:13px;background:#8a8a8a;"></div><span class="t" style="left:34px;top:498px;width:96px">Load   Control+L<svg width="96" height="13"><use href="#a76" x="0"/><use href="#a111" x="6"/><use href="#a97" x="12"/><use href="#a100" x="18"/><use href="#a67" x="42"/><use href="#a111" x="48"/><use href="#a110" x="54"/><use href="#a116" x="60"/><use href="#a114" x="66"/><use href="#a111" x="72"/><use href="#a108" x="78"/><use href="#a43" x="84"/><use href="#a76" x="90"/></svg></span><div style="left:32px;top:517px;width:100px;height:13px;background:#fff;"></div><div style="left:32px;top:529px;width:100px;height:1px;background:#5a5a5a;"></div><div style="left:131px;top:517px;width:1px;height:13px;background:#8a8a8a;"></div><span class="t" style="left:34px;top:517px;width:96px">Save   Control+S<svg width="96" height="13"><use href="#a83" x="0"/><use href="#a97" x="6"/><use href="#a118" x="12"/><use href="#a101" x="18"/><use href="#a67" x="42"/><use href="#a111" x="48"/><use href="#a110" x="54"/><use href="#a116" x="60"/><use href="#a114" x="66"/><use href="#a111" x="72"/><use href="#a108" x="78"/><use href="#a43" x="84"/><use href="#a83" x="90"/></svg></span><div style="left:32px;top:536px;width:118px;height:13px;background:#fff;"></div><div style="left:32px;top:548px;width:118px;height:1px;background:#5a5a5a;"></div><div style="left:149px;top:536px;width:1px;height:13px;background:#8a8a8a;"></div><span class="t" style="left:34px;top:536px;width:114px">Save As   Control+W<svg width="114" height="13"><use href="#a83" x="0"/><use href="#a97" x="6"/><use href="#a118" x="12"/><use href="#a101" x="18"/><use href="#a65" x="30"/><use href="#a115" x="36"/><use href="#a67" x="60"/><use href="#a111" x="66"/><use href="#a110" x="72"/><use href="#a116" x="78"/><use href="#a114" x="84"/><use href="#a111" x="90"/><use href="#a108" x="96"/><use href="#a43" x="102"/><use href="#a87" x="108"/></svg></span><div style="left:32px;top:555px;width:94px;height:13px;background:#fff;"></div><div style="left:32px;top:567px;width:94px;height:1px;background:#5a5a5a;"></div><div style="left:125px;top:555px;width:1px;height:13px;background:#8a8a8a;"></div><span class="t" style="left:34px;top:555px;width:90px">Preference Save<svg width="90" height="13"><use href="#a80" x="0"/><use href="#a114" x="6"/><use href="#a101" x="12"/><use href="#a102" x="18"/><use href="#a101" x="24"/><use href="#a114" x="30"/><use href="#a101" x="36"/><use href="#a110" x="42"/><use href="#a99" x="48"/><use href="#a101" x="54"/><use href="#a83" x="66"/><use href="#a97" x="72"/><use href="#a118" x="78"/><use href="#a101" x="84"/></svg></span><div style="left:32px;top:574px;width:100px;height:13px;background:#fff;"></div><div style="left:32px;top:586px;width:100px;height:1px;background:#5a5a5a;"></div><div style="left:131px;top:574px;width:1px;height:13px;background:#8a8a8a;"></div><span class="t" style="left:34px;top:574px;width:96px">Quit   Control+Q<svg width="96" height="13"><use href="#a81" x="0"/><use href="#a117" x="6"/><use href="#a105" x="12"/><use href="#a116" x="18"/><use href="#a67" x="42"/><use href="#a111" x="48"/><use href="#a110" x="54"/><use href="#a116" x="60"/><use href="#a114" x="66"/><use href="#a111" x="72"/><use href="#a108" x="78"/><use href="#a43" x="84"/><use href="#a81" x="90"/></svg></span></div>
<div class="win" style="left:0;top:0"><div style="left:179px;top:464px;width:140px;height:141px;background:#2a4652;"></div><div style="left:180px;top:465px;width:137px;height:138px;background:#429ec0;"></div><div style="left:180px;top:465px;width:136px;height:137px;background:#84d8f4;"></div><div style="left:182px;top:467px;width:133px;height:134px;background:#429ec0;"></div><div style="left:183px;top:468px;width:132px;height:133px;background:#2a4652;"></div><div style="left:184px;top:469px;width:130px;height:131px;background:#c0c0c0;"></div><div style="left:182px;top:467px;width:18px;height:1px;background:#84d8f4;"></div><div style="left:182px;top:467px;width:1px;height:18px;background:#84d8f4;"></div><div style="left:298px;top:467px;width:17px;height:1px;background:#84d8f4;"></div><div style="left:182px;top:584px;width:1px;height:17px;background:#84d8f4;"></div><div style="left:199px;top:465px;width:1px;height:3px;background:#2a4652;"></div><div style="left:297px;top:465px;width:1px;height:3px;background:#2a4652;"></div><div style="left:199px;top:601px;width:1px;height:2px;background:#2a4652;"></div><div style="left:297px;top:601px;width:1px;height:2px;background:#2a4652;"></div><div style="left:180px;top:484px;width:3px;height:1px;background:#2a4652;"></div><div style="left:180px;top:583px;width:3px;height:1px;background:#2a4652;"></div><div style="left:315px;top:484px;width:2px;height:1px;background:#2a4652;"></div><div style="left:315px;top:583px;width:2px;height:1px;background:#2a4652;"></div><div style="left:198px;top:466px;width:1px;height:2px;background:#2a4652;"></div><div style="left:181px;top:483px;width:2px;height:1px;background:#2a4652;"></div><div style="left:181px;top:582px;width:2px;height:1px;background:#2a4652;"></div><div style="left:296px;top:466px;width:1px;height:2px;background:#2a4652;"></div><div style="left:184px;top:469px;width:12px;height:12px;background:#429ec0;border:2px solid;border-color:#84d8f4 #2a4652 #2a4652 #84d8f4;"></div><svg class="ic" style="left:184px;top:469px" width="16" height="16" shape-rendering="crispEdges"><path fill="#84d8f4" d="M4 10h1v1h-1zM5 3h1v1h-1zM5 9h1v1h-1zM6 4h1v1h-1zM6 8h1v1h-1zM7 4h1v1h-1zM8 5h1v1h-1zM9 4h1v1h-1zM10 4h1v1h-1zM10 7h1v1h-1zM11 3h1v1h-1zM11 8h1v1h-1zM11 9h1v1h-1z"/><path fill="#2a4652" d="M4 4h1v1h-1zM5 5h1v1h-1zM5 11h1v1h-1zM5 12h1v1h-1zM6 6h1v1h-1zM6 11h1v1h-1zM7 7h1v1h-1zM7 10h1v1h-1zM8 9h1v1h-1zM9 10h1v1h-1zM10 11h1v1h-1zM11 5h1v1h-1zM11 6h1v1h-1zM11 12h1v1h-1zM12 4h1v1h-1zM12 10h1v1h-1zM12 11h1v1h-1z"/></svg><div style="left:200px;top:469px;width:46px;height:12px;background:#429ec0;border:2px solid;border-color:#84d8f4 #2a4652 #2a4652 #84d8f4;"></div><div class="clip" style="left:211px;top:470px;width:28px;height:13px"><span class="t t7 w" style="left:0px;top:0px;width:28px">Edit<svg width="28" height="13"><use href="#b69" x="0"/><use href="#b100" x="7"/><use href="#b105" x="14"/><use href="#b116" x="21"/></svg></span></div><div style="left:250px;top:469px;width:12px;height:12px;background:#429ec0;border:2px solid;border-color:#84d8f4 #2a4652 #2a4652 #84d8f4;"></div><div style="left:266px;top:469px;width:12px;height:12px;background:#429ec0;border:2px solid;border-color:#84d8f4 #2a4652 #2a4652 #84d8f4;"></div><div style="left:282px;top:469px;width:12px;height:12px;background:#429ec0;border:2px solid;border-color:#84d8f4 #2a4652 #2a4652 #84d8f4;"></div><div style="left:298px;top:469px;width:12px;height:12px;background:#429ec0;border:2px solid;border-color:#84d8f4 #2a4652 #2a4652 #84d8f4;"></div><div style="left:257px;top:476px;width:2px;height:1px;background:#84d8f4;"></div><div style="left:258px;top:476px;width:1px;height:2px;background:#2a4652;"></div><div style="left:257px;top:477px;width:2px;height:1px;background:#2a4652;"></div><div style="left:257px;top:476px;width:1px;height:2px;background:#84d8f4;"></div><div style="left:270px;top:475px;width:9px;height:1px;background:#84d8f4;"></div><div style="left:278px;top:475px;width:1px;height:4px;background:#2a4652;"></div><div style="left:270px;top:478px;width:9px;height:1px;background:#2a4652;"></div><div style="left:270px;top:475px;width:1px;height:4px;background:#84d8f4;"></div><div style="left:288px;top:473px;width:4px;height:1px;background:#84d8f4;"></div><div style="left:291px;top:473px;width:1px;height:9px;background:#2a4652;"></div><div style="left:288px;top:481px;width:4px;height:1px;background:#2a4652;"></div><div style="left:288px;top:473px;width:1px;height:9px;background:#84d8f4;"></div><div style="left:302px;top:473px;width:9px;height:1px;background:#84d8f4;"></div><div style="left:310px;top:473px;width:1px;height:9px;background:#2a4652;"></div><div style="left:302px;top:481px;width:9px;height:1px;background:#2a4652;"></div><div style="left:302px;top:473px;width:1px;height:9px;background:#84d8f4;"></div><div style="left:184px;top:485px;width:130px;height:115px;background:#c0c0c0;"></div><div style="left:187px;top:488px;width:118px;height:103px;border:3px solid #101010;"></div><div style="left:196px;top:497px;width:100px;height:13px;background:#fff;"></div><div style="left:196px;top:509px;width:100px;height:1px;background:#5a5a5a;"></div><div style="left:295px;top:497px;width:1px;height:13px;background:#8a8a8a;"></div><span class="t" style="left:198px;top:497px;width:96px">&lt;&lt;--- attach ---<svg width="96" height="13"><use href="#a60" x="0"/><use href="#a60" x="6"/><use href="#a45" x="12"/><use href="#a45" x="18"/><use href="#a45" x="24"/><use href="#a97" x="36"/><use href="#a116" x="42"/><use href="#a116" x="48"/><use href="#a97" x="54"/><use href="#a99" x="60"/><use href="#a104" x="66"/><use href="#a45" x="78"/><use href="#a45" x="84"/><use href="#a45" x="90"/></svg></span><div style="left:196px;top:516px;width:88px;height:13px;background:#fff;"></div><div style="left:196px;top:528px;width:88px;height:1px;background:#5a5a5a;"></div><div style="left:283px;top:516px;width:1px;height:13px;background:#8a8a8a;"></div><span class="t" style="left:198px;top:516px;width:84px">Add a new book<svg width="84" height="13"><use href="#a65" x="0"/><use href="#a100" x="6"/><use href="#a100" x="12"/><use href="#a97" x="24"/><use href="#a110" x="36"/><use href="#a101" x="42"/><use href="#a119" x="48"/><use href="#a98" x="60"/><use href="#a111" x="66"/><use href="#a111" x="72"/><use href="#a107" x="78"/></svg></span><div style="left:196px;top:535px;width:100px;height:13px;background:#fff;"></div><div style="left:196px;top:547px;width:100px;height:1px;background:#5a5a5a;"></div><div style="left:295px;top:535px;width:1px;height:13px;background:#8a8a8a;"></div><span class="t" style="left:198px;top:535px;width:96px">Interface colors<svg width="96" height="13"><use href="#a73" x="0"/><use href="#a110" x="6"/><use href="#a116" x="12"/><use href="#a101" x="18"/><use href="#a114" x="24"/><use href="#a102" x="30"/><use href="#a97" x="36"/><use href="#a99" x="42"/><use href="#a101" x="48"/><use href="#a99" x="60"/><use href="#a111" x="66"/><use href="#a108" x="72"/><use href="#a111" x="78"/><use href="#a114" x="84"/><use href="#a115" x="90"/></svg></span><div style="left:196px;top:554px;width:106px;height:13px;background:#fff;"></div><div style="left:196px;top:566px;width:106px;height:1px;background:#5a5a5a;"></div><div style="left:301px;top:554px;width:1px;height:13px;background:#8a8a8a;"></div><span class="t" style="left:198px;top:554px;width:102px">New book defaults<svg width="102" height="13"><use href="#a78" x="0"/><use href="#a101" x="6"/><use href="#a119" x="12"/><use href="#a98" x="24"/><use href="#a111" x="30"/><use href="#a111" x="36"/><use href="#a107" x="42"/><use href="#a100" x="54"/><use href="#a101" x="60"/><use href="#a102" x="66"/><use href="#a97" x="72"/><use href="#a117" x="78"/><use href="#a108" x="84"/><use href="#a116" x="90"/><use href="#a115" x="96"/></svg></span><div style="left:196px;top:573px;width:52px;height:13px;background:#fff;"></div><div style="left:196px;top:585px;width:52px;height:1px;background:#5a5a5a;"></div><div style="left:247px;top:573px;width:1px;height:13px;background:#8a8a8a;"></div><span class="t" style="left:198px;top:573px;width:48px">Language<svg width="48" height="13"><use href="#a76" x="0"/><use href="#a97" x="6"/><use href="#a110" x="12"/><use href="#a103" x="18"/><use href="#a117" x="24"/><use href="#a97" x="30"/><use href="#a103" x="36"/><use href="#a101" x="42"/></svg></span></div>
<div class="win" style="left:0;top:0"><div style="left:333px;top:257px;width:134px;height:350px;background:#2a4652;"></div><div style="left:334px;top:258px;width:131px;height:347px;background:#429ec0;"></div><div style="left:334px;top:258px;width:130px;height:346px;background:#84d8f4;"></div><div style="left:336px;top:260px;width:127px;height:343px;background:#429ec0;"></div><div style="left:337px;top:261px;width:126px;height:342px;background:#2a4652;"></div><div style="left:338px;top:262px;width:124px;height:340px;background:#e6e6e6;"></div><div style="left:336px;top:260px;width:18px;height:1px;background:#84d8f4;"></div><div style="left:336px;top:260px;width:1px;height:18px;background:#84d8f4;"></div><div style="left:446px;top:260px;width:17px;height:1px;background:#84d8f4;"></div><div style="left:336px;top:586px;width:1px;height:17px;background:#84d8f4;"></div><div style="left:353px;top:258px;width:1px;height:3px;background:#2a4652;"></div><div style="left:445px;top:258px;width:1px;height:3px;background:#2a4652;"></div><div style="left:353px;top:603px;width:1px;height:2px;background:#2a4652;"></div><div style="left:445px;top:603px;width:1px;height:2px;background:#2a4652;"></div><div style="left:334px;top:277px;width:3px;height:1px;background:#2a4652;"></div><div style="left:334px;top:585px;width:3px;height:1px;background:#2a4652;"></div><div style="left:463px;top:277px;width:2px;height:1px;background:#2a4652;"></div><div style="left:463px;top:585px;width:2px;height:1px;background:#2a4652;"></div><div style="left:352px;top:259px;width:1px;height:2px;background:#2a4652;"></div><div style="left:335px;top:276px;width:2px;height:1px;background:#2a4652;"></div><div style="left:335px;top:584px;width:2px;height:1px;background:#2a4652;"></div><div style="left:444px;top:259px;width:1px;height:2px;background:#2a4652;"></div><div style="left:338px;top:262px;width:12px;height:12px;background:#429ec0;border:2px solid;border-color:#84d8f4 #2a4652 #2a4652 #84d8f4;"></div><svg class="ic" style="left:338px;top:262px" width="16" height="16" shape-rendering="crispEdges"><path fill="#84d8f4" d="M4 10h1v1h-1zM5 3h1v1h-1zM5 9h1v1h-1zM6 4h1v1h-1zM6 8h1v1h-1zM7 4h1v1h-1zM8 5h1v1h-1zM9 4h1v1h-1zM10 4h1v1h-1zM10 7h1v1h-1zM11 3h1v1h-1zM11 8h1v1h-1zM11 9h1v1h-1z"/><path fill="#2a4652" d="M4 4h1v1h-1zM5 5h1v1h-1zM5 11h1v1h-1zM5 12h1v1h-1zM6 6h1v1h-1zM6 11h1v1h-1zM7 7h1v1h-1zM7 10h1v1h-1zM8 9h1v1h-1zM9 10h1v1h-1zM10 11h1v1h-1zM11 5h1v1h-1zM11 6h1v1h-1zM11 12h1v1h-1zM12 4h1v1h-1zM12 10h1v1h-1zM12 11h1v1h-1z"/></svg><div style="left:354px;top:262px;width:40px;height:12px;background:#429ec0;border:2px solid;border-color:#84d8f4 #2a4652 #2a4652 #84d8f4;"></div><div class="clip" style="left:356px;top:263px;width:41px;height:13px"><span class="t t7 w" style="left:0px;top:0px;width:42px">Edit c<svg width="42" height="13"><use href="#b69" x="0"/><use href="#b100" x="7"/><use href="#b105" x="14"/><use href="#b116" x="21"/><use href="#b99" x="35"/></svg></span></div><div style="left:398px;top:262px;width:12px;height:12px;background:#429ec0;border:2px solid;border-color:#84d8f4 #2a4652 #2a4652 #84d8f4;"></div><div style="left:414px;top:262px;width:12px;height:12px;background:#429ec0;border:2px solid;border-color:#84d8f4 #2a4652 #2a4652 #84d8f4;"></div><div style="left:430px;top:262px;width:12px;height:12px;background:#429ec0;border:2px solid;border-color:#84d8f4 #2a4652 #2a4652 #84d8f4;"></div><div style="left:446px;top:262px;width:12px;height:12px;background:#429ec0;border:2px solid;border-color:#84d8f4 #2a4652 #2a4652 #84d8f4;"></div><div style="left:405px;top:269px;width:2px;height:1px;background:#84d8f4;"></div><div style="left:406px;top:269px;width:1px;height:2px;background:#2a4652;"></div><div style="left:405px;top:270px;width:2px;height:1px;background:#2a4652;"></div><div style="left:405px;top:269px;width:1px;height:2px;background:#84d8f4;"></div><div style="left:418px;top:268px;width:9px;height:1px;background:#84d8f4;"></div><div style="left:426px;top:268px;width:1px;height:4px;background:#2a4652;"></div><div style="left:418px;top:271px;width:9px;height:1px;background:#2a4652;"></div><div style="left:418px;top:268px;width:1px;height:4px;background:#84d8f4;"></div><div style="left:436px;top:266px;width:4px;height:1px;background:#84d8f4;"></div><div style="left:439px;top:266px;width:1px;height:9px;background:#2a4652;"></div><div style="left:436px;top:274px;width:4px;height:1px;background:#2a4652;"></div><div style="left:436px;top:266px;width:1px;height:9px;background:#84d8f4;"></div><div style="left:450px;top:266px;width:9px;height:1px;background:#84d8f4;"></div><div style="left:458px;top:266px;width:1px;height:9px;background:#2a4652;"></div><div style="left:450px;top:274px;width:9px;height:1px;background:#2a4652;"></div><div style="left:450px;top:266px;width:1px;height:9px;background:#84d8f4;"></div><div style="left:338px;top:278px;width:124px;height:324px;background:#e6e6e6;"></div><div style="left:341px;top:281px;width:112px;height:312px;border:3px solid #101010;"></div><div style="left:350px;top:290px;width:100px;height:13px;background:#fff;"></div><div style="left:350px;top:302px;width:100px;height:1px;background:#5a5a5a;"></div><div style="left:449px;top:290px;width:1px;height:13px;background:#8a8a8a;"></div><span class="t" style="left:352px;top:290px;width:96px">&lt;&lt;--- attach ---<svg width="96" height="13"><use href="#a60" x="0"/><use href="#a60" x="6"/><use href="#a45" x="12"/><use href="#a45" x="18"/><use href="#a45" x="24"/><use href="#a97" x="36"/><use href="#a116" x="42"/><use href="#a116" x="48"/><use href="#a97" x="54"/><use href="#a99" x="60"/><use href="#a104" x="66"/><use href="#a45" x="78"/><use href="#a45" x="84"/><use href="#a45" x="90"/></svg></span><div style="left:347px;top:306px;width:106px;height:57px;background:#c0c0c0;"></div><div class="clip" style="left:347px;top:306px;width:106px;height:57px"><span class="t" style="left:0px;top:-2px;width:48px">Standard<svg width="48" height="13"><use href="#a83" x="0"/><use href="#a116" x="6"/><use href="#a97" x="12"/><use href="#a110" x="18"/><use href="#a100" x="24"/><use href="#a97" x="30"/><use href="#a114" x="36"/><use href="#a100" x="42"/></svg></span></div><div style="left:349px;top:317px;width:102px;height:12px;background:#ababab;"></div><div style="left:349px;top:317px;width:102px;height:1px;background:#6a6a6a;"></div><div style="left:349px;top:317px;width:1px;height:12px;background:#6a6a6a;"></div><div style="left:349px;top:328px;width:102px;height:1px;background:#ffffff;"></div><div style="left:450px;top:317px;width:1px;height:12px;background:#ffffff;"></div><div style="left:426px;top:318px;width:10px;height:10px;background:#c0c0c0;"></div><div style="left:426px;top:318px;width:10px;height:1px;background:#ffffff;"></div><div style="left:426px;top:318px;width:1px;height:10px;background:#ffffff;"></div><div style="left:426px;top:327px;width:10px;height:1px;background:#6a6a6a;"></div><div style="left:435px;top:318px;width:1px;height:10px;background:#6a6a6a;"></div><div style="left:349px;top:333px;width:102px;height:12px;background:#ababab;"></div><div style="left:349px;top:333px;width:102px;height:1px;background:#6a6a6a;"></div><div style="left:349px;top:333px;width:1px;height:12px;background:#6a6a6a;"></div><div style="left:349px;top:344px;width:102px;height:1px;background:#ffffff;"></div><div style="left:450px;top:333px;width:1px;height:12px;background:#ffffff;"></div><div style="left:426px;top:334px;width:10px;height:10px;background:#c0c0c0;"></div><div style="left:426px;top:334px;width:10px;height:1px;background:#ffffff;"></div><div style="left:426px;top:334px;width:1px;height:10px;background:#ffffff;"></div><div style="left:426px;top:343px;width:10px;height:1px;background:#6a6a6a;"></div><div style="left:435px;top:334px;width:1px;height:10px;background:#6a6a6a;"></div><div style="left:349px;top:349px;width:102px;height:12px;background:#ababab;"></div><div style="left:349px;top:349px;width:102px;height:1px;background:#6a6a6a;"></div><div style="left:349px;top:349px;width:1px;height:12px;background:#6a6a6a;"></div><div style="left:349px;top:360px;width:102px;height:1px;background:#ffffff;"></div><div style="left:450px;top:349px;width:1px;height:12px;background:#ffffff;"></div><div style="left:426px;top:350px;width:10px;height:10px;background:#c0c0c0;"></div><div style="left:426px;top:350px;width:10px;height:1px;background:#ffffff;"></div><div style="left:426px;top:350px;width:1px;height:10px;background:#ffffff;"></div><div style="left:426px;top:359px;width:10px;height:1px;background:#6a6a6a;"></div><div style="left:435px;top:350px;width:1px;height:10px;background:#6a6a6a;"></div><div style="left:347px;top:363px;width:106px;height:58px;background:#c8c000;"></div><div class="clip" style="left:347px;top:363px;width:106px;height:58px"><span class="t" style="left:0px;top:-2px;width:18px">Tip<svg width="18" height="13"><use href="#a84" x="0"/><use href="#a105" x="6"/><use href="#a112" x="12"/></svg></span></div><div style="left:349px;top:376px;width:102px;height:12px;background:#b0a800;"></div><div style="left:349px;top:376px;width:102px;height:1px;background:#605c00;"></div><div style="left:349px;top:376px;width:1px;height:12px;background:#605c00;"></div><div style="left:349px;top:387px;width:102px;height:1px;background:#ffff00;"></div><div style="left:450px;top:376px;width:1px;height:12px;background:#ffff00;"></div><div style="left:426px;top:377px;width:10px;height:10px;background:#c8c000;"></div><div style="left:426px;top:377px;width:10px;height:1px;background:#ffff00;"></div><div style="left:426px;top:377px;width:1px;height:10px;background:#ffff00;"></div><div style="left:426px;top:386px;width:10px;height:1px;background:#605c00;"></div><div style="left:435px;top:377px;width:1px;height:10px;background:#605c00;"></div><div style="left:349px;top:392px;width:102px;height:12px;background:#b0a800;"></div><div style="left:349px;top:392px;width:102px;height:1px;background:#605c00;"></div><div style="left:349px;top:392px;width:1px;height:12px;background:#605c00;"></div><div style="left:349px;top:403px;width:102px;height:1px;background:#ffff00;"></div><div style="left:450px;top:392px;width:1px;height:12px;background:#ffff00;"></div><div style="left:426px;top:393px;width:10px;height:10px;background:#c8c000;"></div><div style="left:426px;top:393px;width:10px;height:1px;background:#ffff00;"></div><div style="left:426px;top:393px;width:1px;height:10px;background:#ffff00;"></div><div style="left:426px;top:402px;width:10px;height:1px;background:#605c00;"></div><div style="left:435px;top:393px;width:1px;height:10px;background:#605c00;"></div><div style="left:349px;top:408px;width:102px;height:12px;background:#b0a800;"></div><div style="left:349px;top:408px;width:102px;height:1px;background:#605c00;"></div><div style="left:349px;top:408px;width:1px;height:12px;background:#605c00;"></div><div style="left:349px;top:419px;width:102px;height:1px;background:#ffff00;"></div><div style="left:450px;top:408px;width:1px;height:12px;background:#ffff00;"></div><div style="left:350px;top:409px;width:10px;height:10px;background:#c8c000;"></div><div style="left:350px;top:409px;width:10px;height:1px;background:#ffff00;"></div><div style="left:350px;top:409px;width:1px;height:10px;background:#ffff00;"></div><div style="left:350px;top:418px;width:10px;height:1px;background:#605c00;"></div><div style="left:359px;top:409px;width:1px;height:10px;background:#605c00;"></div><div style="left:347px;top:421px;width:106px;height:58px;background:#00be00;"></div><div class="clip" style="left:347px;top:421px;width:106px;height:58px"><span class="t" style="left:0px;top:-1px;width:36px">Header<svg width="36" height="13"><use href="#a72" x="0"/><use href="#a101" x="6"/><use href="#a97" x="12"/><use href="#a100" x="18"/><use href="#a101" x="24"/><use href="#a114" x="30"/></svg></span></div><div style="left:349px;top:433px;width:102px;height:12px;background:#00a800;"></div><div style="left:349px;top:433px;width:102px;height:1px;background:#006000;"></div><div style="left:349px;top:433px;width:1px;height:12px;background:#006000;"></div><div style="left:349px;top:444px;width:102px;height:1px;background:#00ff00;"></div><div style="left:450px;top:433px;width:1px;height:12px;background:#00ff00;"></div><div style="left:350px;top:434px;width:10px;height:10px;background:#00be00;"></div><div style="left:350px;top:434px;width:10px;height:1px;background:#00ff00;"></div><div style="left:350px;top:434px;width:1px;height:10px;background:#00ff00;"></div><div style="left:350px;top:443px;width:10px;height:1px;background:#006000;"></div><div style="left:359px;top:434px;width:1px;height:10px;background:#006000;"></div><div style="left:349px;top:449px;width:102px;height:12px;background:#00a800;"></div><div style="left:349px;top:449px;width:102px;height:1px;background:#006000;"></div><div style="left:349px;top:449px;width:1px;height:12px;background:#006000;"></div><div style="left:349px;top:460px;width:102px;height:1px;background:#00ff00;"></div><div style="left:450px;top:449px;width:1px;height:12px;background:#00ff00;"></div><div style="left:426px;top:450px;width:10px;height:10px;background:#00be00;"></div><div style="left:426px;top:450px;width:10px;height:1px;background:#00ff00;"></div><div style="left:426px;top:450px;width:1px;height:10px;background:#00ff00;"></div><div style="left:426px;top:459px;width:10px;height:1px;background:#006000;"></div><div style="left:435px;top:450px;width:1px;height:10px;background:#006000;"></div><div style="left:349px;top:465px;width:102px;height:12px;background:#00a800;"></div><div style="left:349px;top:465px;width:102px;height:1px;background:#006000;"></div><div style="left:349px;top:465px;width:1px;height:12px;background:#006000;"></div><div style="left:349px;top:476px;width:102px;height:1px;background:#00ff00;"></div><div style="left:450px;top:465px;width:1px;height:12px;background:#00ff00;"></div><div style="left:350px;top:466px;width:10px;height:10px;background:#00be00;"></div><div style="left:350px;top:466px;width:10px;height:1px;background:#00ff00;"></div><div style="left:350px;top:466px;width:1px;height:10px;background:#00ff00;"></div><div style="left:350px;top:475px;width:10px;height:1px;background:#006000;"></div><div style="left:359px;top:466px;width:1px;height:10px;background:#006000;"></div><div style="left:347px;top:479px;width:106px;height:57px;background:#c080c0;"></div><div class="clip" style="left:347px;top:479px;width:106px;height:57px"><span class="t" style="left:0px;top:-2px;width:48px">Borrowed<svg width="48" height="13"><use href="#a66" x="0"/><use href="#a111" x="6"/><use href="#a114" x="12"/><use href="#a114" x="18"/><use href="#a111" x="24"/><use href="#a119" x="30"/><use href="#a101" x="36"/><use href="#a100" x="42"/></svg></span></div><div style="left:349px;top:490px;width:102px;height:12px;background:#aa70aa;"></div><div style="left:349px;top:490px;width:102px;height:1px;background:#604060;"></div><div style="left:349px;top:490px;width:1px;height:12px;background:#604060;"></div><div style="left:349px;top:501px;width:102px;height:1px;background:#ffb0ff;"></div><div style="left:450px;top:490px;width:1px;height:12px;background:#ffb0ff;"></div><div style="left:426px;top:491px;width:10px;height:10px;background:#c080c0;"></div><div style="left:426px;top:491px;width:10px;height:1px;background:#ffb0ff;"></div><div style="left:426px;top:491px;width:1px;height:10px;background:#ffb0ff;"></div><div style="left:426px;top:500px;width:10px;height:1px;background:#604060;"></div><div style="left:435px;top:491px;width:1px;height:10px;background:#604060;"></div><div style="left:349px;top:506px;width:102px;height:12px;background:#aa70aa;"></div><div style="left:349px;top:506px;width:102px;height:1px;background:#604060;"></div><div style="left:349px;top:506px;width:1px;height:12px;background:#604060;"></div><div style="left:349px;top:517px;width:102px;height:1px;background:#ffb0ff;"></div><div style="left:450px;top:506px;width:1px;height:12px;background:#ffb0ff;"></div><div style="left:400px;top:507px;width:10px;height:10px;background:#c080c0;"></div><div style="left:400px;top:507px;width:10px;height:1px;background:#ffb0ff;"></div><div style="left:400px;top:507px;width:1px;height:10px;background:#ffb0ff;"></div><div style="left:400px;top:516px;width:10px;height:1px;background:#604060;"></div><div style="left:409px;top:507px;width:1px;height:10px;background:#604060;"></div><div style="left:349px;top:522px;width:102px;height:12px;background:#aa70aa;"></div><div style="left:349px;top:522px;width:102px;height:1px;background:#604060;"></div><div style="left:349px;top:522px;width:1px;height:12px;background:#604060;"></div><div style="left:349px;top:533px;width:102px;height:1px;background:#ffb0ff;"></div><div style="left:450px;top:522px;width:1px;height:12px;background:#ffb0ff;"></div><div style="left:426px;top:523px;width:10px;height:10px;background:#c080c0;"></div><div style="left:426px;top:523px;width:10px;height:1px;background:#ffb0ff;"></div><div style="left:426px;top:523px;width:1px;height:10px;background:#ffb0ff;"></div><div style="left:426px;top:532px;width:10px;height:1px;background:#604060;"></div><div style="left:435px;top:523px;width:1px;height:10px;background:#604060;"></div><div style="left:347px;top:536px;width:106px;height:58px;background:#e6e6e6;"></div><div class="clip" style="left:347px;top:536px;width:106px;height:58px"><span class="t" style="left:0px;top:-2px;width:24px">Menu<svg width="24" height="13"><use href="#a77" x="0"/><use href="#a101" x="6"/><use href="#a110" x="12"/><use href="#a117" x="18"/></svg></span></div><div style="left:349px;top:547px;width:102px;height:12px;background:#cdcdcd;"></div><div style="left:349px;top:547px;width:102px;height:1px;background:#707070;"></div><div style="left:349px;top:547px;width:1px;height:12px;background:#707070;"></div><div style="left:349px;top:558px;width:102px;height:1px;background:#ffffff;"></div><div style="left:450px;top:547px;width:1px;height:12px;background:#ffffff;"></div><div style="left:440px;top:548px;width:10px;height:10px;background:#e6e6e6;"></div><div style="left:440px;top:548px;width:10px;height:1px;background:#ffffff;"></div><div style="left:440px;top:548px;width:1px;height:10px;background:#ffffff;"></div><div style="left:440px;top:557px;width:10px;height:1px;background:#707070;"></div><div style="left:449px;top:548px;width:1px;height:10px;background:#707070;"></div><div style="left:349px;top:563px;width:102px;height:12px;background:#cdcdcd;"></div><div style="left:349px;top:563px;width:102px;height:1px;background:#707070;"></div><div style="left:349px;top:563px;width:1px;height:12px;background:#707070;"></div><div style="left:349px;top:574px;width:102px;height:1px;background:#ffffff;"></div><div style="left:450px;top:563px;width:1px;height:12px;background:#ffffff;"></div><div style="left:440px;top:564px;width:10px;height:10px;background:#e6e6e6;"></div><div style="left:440px;top:564px;width:10px;height:1px;background:#ffffff;"></div><div style="left:440px;top:564px;width:1px;height:10px;background:#ffffff;"></div><div style="left:440px;top:573px;width:10px;height:1px;background:#707070;"></div><div style="left:449px;top:564px;width:1px;height:10px;background:#707070;"></div><div style="left:349px;top:579px;width:102px;height:12px;background:#cdcdcd;"></div><div style="left:349px;top:579px;width:102px;height:1px;background:#707070;"></div><div style="left:349px;top:579px;width:1px;height:12px;background:#707070;"></div><div style="left:349px;top:590px;width:102px;height:1px;background:#ffffff;"></div><div style="left:450px;top:579px;width:1px;height:12px;background:#ffffff;"></div><div style="left:440px;top:580px;width:10px;height:10px;background:#e6e6e6;"></div><div style="left:440px;top:580px;width:10px;height:1px;background:#ffffff;"></div><div style="left:440px;top:580px;width:1px;height:10px;background:#ffffff;"></div><div style="left:440px;top:589px;width:10px;height:1px;background:#707070;"></div><div style="left:449px;top:580px;width:1px;height:10px;background:#707070;"></div></div>
<div class="win" style="left:0;top:0"><div style="left:487px;top:338px;width:134px;height:93px;background:#2a4652;"></div><div style="left:488px;top:339px;width:131px;height:90px;background:#429ec0;"></div><div style="left:488px;top:339px;width:130px;height:89px;background:#84d8f4;"></div><div style="left:490px;top:341px;width:127px;height:86px;background:#429ec0;"></div><div style="left:491px;top:342px;width:126px;height:85px;background:#2a4652;"></div><div style="left:492px;top:343px;width:124px;height:83px;background:#e6e6e6;"></div><div style="left:490px;top:341px;width:18px;height:1px;background:#84d8f4;"></div><div style="left:490px;top:341px;width:1px;height:18px;background:#84d8f4;"></div><div style="left:600px;top:341px;width:17px;height:1px;background:#84d8f4;"></div><div style="left:490px;top:410px;width:1px;height:17px;background:#84d8f4;"></div><div style="left:507px;top:339px;width:1px;height:3px;background:#2a4652;"></div><div style="left:599px;top:339px;width:1px;height:3px;background:#2a4652;"></div><div style="left:507px;top:427px;width:1px;height:2px;background:#2a4652;"></div><div style="left:599px;top:427px;width:1px;height:2px;background:#2a4652;"></div><div style="left:488px;top:358px;width:3px;height:1px;background:#2a4652;"></div><div style="left:488px;top:409px;width:3px;height:1px;background:#2a4652;"></div><div style="left:617px;top:358px;width:2px;height:1px;background:#2a4652;"></div><div style="left:617px;top:409px;width:2px;height:1px;background:#2a4652;"></div><div style="left:506px;top:340px;width:1px;height:2px;background:#2a4652;"></div><div style="left:489px;top:357px;width:2px;height:1px;background:#2a4652;"></div><div style="left:489px;top:408px;width:2px;height:1px;background:#2a4652;"></div><div style="left:598px;top:340px;width:1px;height:2px;background:#2a4652;"></div><div style="left:492px;top:343px;width:12px;height:12px;background:#429ec0;border:2px solid;border-color:#84d8f4 #2a4652 #2a4652 #84d8f4;"></div><svg class="ic" style="left:492px;top:343px" width="16" height="16" shape-rendering="crispEdges"><path fill="#84d8f4" d="M4 10h1v1h-1zM5 3h1v1h-1zM5 9h1v1h-1zM6 4h1v1h-1zM6 8h1v1h-1zM7 4h1v1h-1zM8 5h1v1h-1zM9 4h1v1h-1zM10 4h1v1h-1zM10 7h1v1h-1zM11 3h1v1h-1zM11 8h1v1h-1zM11 9h1v1h-1z"/><path fill="#2a4652" d="M4 4h1v1h-1zM5 5h1v1h-1zM5 11h1v1h-1zM5 12h1v1h-1zM6 6h1v1h-1zM6 11h1v1h-1zM7 7h1v1h-1zM7 10h1v1h-1zM8 9h1v1h-1zM9 10h1v1h-1zM10 11h1v1h-1zM11 5h1v1h-1zM11 6h1v1h-1zM11 12h1v1h-1zM12 4h1v1h-1zM12 10h1v1h-1zM12 11h1v1h-1z"/></svg><div style="left:508px;top:343px;width:40px;height:12px;background:#429ec0;border:2px solid;border-color:#84d8f4 #2a4652 #2a4652 #84d8f4;"></div><div class="clip" style="left:510px;top:344px;width:41px;height:13px"><span class="t t7 w" style="left:0px;top:0px;width:42px">Langua<svg width="42" height="13"><use href="#b76" x="0"/><use href="#b97" x="7"/><use href="#b110" x="14"/><use href="#b103" x="21"/><use href="#b117" x="28"/><use href="#b97" x="35"/></svg></span></div><div style="left:552px;top:343px;width:12px;height:12px;background:#429ec0;border:2px solid;border-color:#84d8f4 #2a4652 #2a4652 #84d8f4;"></div><div style="left:568px;top:343px;width:12px;height:12px;background:#429ec0;border:2px solid;border-color:#84d8f4 #2a4652 #2a4652 #84d8f4;"></div><div style="left:584px;top:343px;width:12px;height:12px;background:#429ec0;border:2px solid;border-color:#84d8f4 #2a4652 #2a4652 #84d8f4;"></div><div style="left:600px;top:343px;width:12px;height:12px;background:#429ec0;border:2px solid;border-color:#84d8f4 #2a4652 #2a4652 #84d8f4;"></div><div style="left:559px;top:350px;width:2px;height:1px;background:#84d8f4;"></div><div style="left:560px;top:350px;width:1px;height:2px;background:#2a4652;"></div><div style="left:559px;top:351px;width:2px;height:1px;background:#2a4652;"></div><div style="left:559px;top:350px;width:1px;height:2px;background:#84d8f4;"></div><div style="left:572px;top:349px;width:9px;height:1px;background:#84d8f4;"></div><div style="left:580px;top:349px;width:1px;height:4px;background:#2a4652;"></div><div style="left:572px;top:352px;width:9px;height:1px;background:#2a4652;"></div><div style="left:572px;top:349px;width:1px;height:4px;background:#84d8f4;"></div><div style="left:590px;top:347px;width:4px;height:1px;background:#84d8f4;"></div><div style="left:593px;top:347px;width:1px;height:9px;background:#2a4652;"></div><div style="left:590px;top:355px;width:4px;height:1px;background:#2a4652;"></div><div style="left:590px;top:347px;width:1px;height:9px;background:#84d8f4;"></div><div style="left:604px;top:347px;width:9px;height:1px;background:#84d8f4;"></div><div style="left:612px;top:347px;width:1px;height:9px;background:#2a4652;"></div><div style="left:604px;top:355px;width:9px;height:1px;background:#2a4652;"></div><div style="left:604px;top:347px;width:1px;height:9px;background:#84d8f4;"></div><div style="left:492px;top:359px;width:124px;height:67px;background:#e6e6e6;"></div><div style="left:495px;top:362px;width:112px;height:55px;border:3px solid #101010;"></div><div style="left:504px;top:371px;width:100px;height:13px;background:#fff;"></div><div style="left:504px;top:383px;width:100px;height:1px;background:#5a5a5a;"></div><div style="left:603px;top:371px;width:1px;height:13px;background:#8a8a8a;"></div><span class="t" style="left:506px;top:371px;width:96px">&lt;&lt;--- attach ---<svg width="96" height="13"><use href="#a60" x="0"/><use href="#a60" x="6"/><use href="#a45" x="12"/><use href="#a45" x="18"/><use href="#a45" x="24"/><use href="#a97" x="36"/><use href="#a116" x="42"/><use href="#a116" x="48"/><use href="#a97" x="54"/><use href="#a99" x="60"/><use href="#a104" x="66"/><use href="#a45" x="78"/><use href="#a45" x="84"/><use href="#a45" x="90"/></svg></span><div style="left:503px;top:389px;width:8px;height:8px;background:#c4c4c4;"></div><div style="left:503px;top:389px;width:8px;height:1px;background:#6e6e6e;"></div><div style="left:503px;top:389px;width:1px;height:8px;background:#6e6e6e;"></div><div style="left:503px;top:396px;width:8px;height:1px;background:#fff;"></div><div style="left:510px;top:389px;width:1px;height:8px;background:#fff;"></div><span class="t" style="left:513px;top:387px;width:42px">English<svg width="42" height="13"><use href="#a69" x="0"/><use href="#a110" x="6"/><use href="#a103" x="12"/><use href="#a108" x="18"/><use href="#a105" x="24"/><use href="#a115" x="30"/><use href="#a104" x="36"/></svg></span><div style="left:503px;top:404px;width:8px;height:8px;background:#fff;"></div><div style="left:503px;top:411px;width:8px;height:1px;background:#6e6e6e;"></div><div style="left:510px;top:404px;width:1px;height:8px;background:#6e6e6e;"></div><span class="t" style="left:513px;top:402px;width:48px">Français<svg width="48" height="13"><use href="#a70" x="0"/><use href="#a114" x="6"/><use href="#a97" x="12"/><use href="#a110" x="18"/><use href="#a231" x="24"/><use href="#a97" x="30"/><use href="#a105" x="36"/><use href="#a115" x="42"/></svg></span></div>
<div class="win" style="left:0;top:0"><div style="left:483px;top:449px;width:162px;height:161px;background:#2a4652;"></div><div style="left:484px;top:450px;width:159px;height:158px;background:#429ec0;"></div><div style="left:484px;top:450px;width:158px;height:157px;background:#84d8f4;"></div><div style="left:486px;top:452px;width:155px;height:154px;background:#429ec0;"></div><div style="left:487px;top:453px;width:154px;height:153px;background:#2a4652;"></div><div style="left:488px;top:454px;width:152px;height:151px;background:#c0c0c0;"></div><div style="left:486px;top:452px;width:18px;height:1px;background:#84d8f4;"></div><div style="left:486px;top:452px;width:1px;height:18px;background:#84d8f4;"></div><div style="left:624px;top:452px;width:17px;height:1px;background:#84d8f4;"></div><div style="left:486px;top:589px;width:1px;height:17px;background:#84d8f4;"></div><div style="left:503px;top:450px;width:1px;height:3px;background:#2a4652;"></div><div style="left:623px;top:450px;width:1px;height:3px;background:#2a4652;"></div><div style="left:503px;top:606px;width:1px;height:2px;background:#2a4652;"></div><div style="left:623px;top:606px;width:1px;height:2px;background:#2a4652;"></div><div style="left:484px;top:469px;width:3px;height:1px;background:#2a4652;"></div><div style="left:484px;top:588px;width:3px;height:1px;background:#2a4652;"></div><div style="left:641px;top:469px;width:2px;height:1px;background:#2a4652;"></div><div style="left:641px;top:588px;width:2px;height:1px;background:#2a4652;"></div><div style="left:502px;top:451px;width:1px;height:2px;background:#2a4652;"></div><div style="left:485px;top:468px;width:2px;height:1px;background:#2a4652;"></div><div style="left:485px;top:587px;width:2px;height:1px;background:#2a4652;"></div><div style="left:622px;top:451px;width:1px;height:2px;background:#2a4652;"></div><div style="left:488px;top:454px;width:12px;height:12px;background:#429ec0;border:2px solid;border-color:#84d8f4 #2a4652 #2a4652 #84d8f4;"></div><svg class="ic" style="left:488px;top:454px" width="16" height="16" shape-rendering="crispEdges"><path fill="#84d8f4" d="M4 10h1v1h-1zM5 3h1v1h-1zM5 9h1v1h-1zM6 4h1v1h-1zM6 8h1v1h-1zM7 4h1v1h-1zM8 5h1v1h-1zM9 4h1v1h-1zM10 4h1v1h-1zM10 7h1v1h-1zM11 3h1v1h-1zM11 8h1v1h-1zM11 9h1v1h-1z"/><path fill="#2a4652" d="M4 4h1v1h-1zM5 5h1v1h-1zM5 11h1v1h-1zM5 12h1v1h-1zM6 6h1v1h-1zM6 11h1v1h-1zM7 7h1v1h-1zM7 10h1v1h-1zM8 9h1v1h-1zM9 10h1v1h-1zM10 11h1v1h-1zM11 5h1v1h-1zM11 6h1v1h-1zM11 12h1v1h-1zM12 4h1v1h-1zM12 10h1v1h-1zM12 11h1v1h-1z"/></svg><div style="left:504px;top:454px;width:68px;height:12px;background:#429ec0;border:2px solid;border-color:#84d8f4 #2a4652 #2a4652 #84d8f4;"></div><div class="clip" style="left:526px;top:455px;width:28px;height:13px"><span class="t t7 w" style="left:0px;top:0px;width:28px">View<svg width="28" height="13"><use href="#b86" x="0"/><use href="#b105" x="7"/><use href="#b101" x="14"/><use href="#b119" x="21"/></svg></span></div><div style="left:576px;top:454px;width:12px;height:12px;background:#429ec0;border:2px solid;border-color:#84d8f4 #2a4652 #2a4652 #84d8f4;"></div><div style="left:592px;top:454px;width:12px;height:12px;background:#429ec0;border:2px solid;border-color:#84d8f4 #2a4652 #2a4652 #84d8f4;"></div><div style="left:608px;top:454px;width:12px;height:12px;background:#429ec0;border:2px solid;border-color:#84d8f4 #2a4652 #2a4652 #84d8f4;"></div><div style="left:624px;top:454px;width:12px;height:12px;background:#429ec0;border:2px solid;border-color:#84d8f4 #2a4652 #2a4652 #84d8f4;"></div><div style="left:583px;top:461px;width:2px;height:1px;background:#84d8f4;"></div><div style="left:584px;top:461px;width:1px;height:2px;background:#2a4652;"></div><div style="left:583px;top:462px;width:2px;height:1px;background:#2a4652;"></div><div style="left:583px;top:461px;width:1px;height:2px;background:#84d8f4;"></div><div style="left:596px;top:460px;width:9px;height:1px;background:#84d8f4;"></div><div style="left:604px;top:460px;width:1px;height:4px;background:#2a4652;"></div><div style="left:596px;top:463px;width:9px;height:1px;background:#2a4652;"></div><div style="left:596px;top:460px;width:1px;height:4px;background:#84d8f4;"></div><div style="left:614px;top:458px;width:4px;height:1px;background:#84d8f4;"></div><div style="left:617px;top:458px;width:1px;height:9px;background:#2a4652;"></div><div style="left:614px;top:466px;width:4px;height:1px;background:#2a4652;"></div><div style="left:614px;top:458px;width:1px;height:9px;background:#84d8f4;"></div><div style="left:628px;top:458px;width:9px;height:1px;background:#84d8f4;"></div><div style="left:636px;top:458px;width:1px;height:9px;background:#2a4652;"></div><div style="left:628px;top:466px;width:9px;height:1px;background:#2a4652;"></div><div style="left:628px;top:458px;width:1px;height:9px;background:#84d8f4;"></div><div style="left:488px;top:470px;width:152px;height:135px;background:#c0c0c0;"></div><div style="left:491px;top:473px;width:140px;height:123px;border:3px solid #101010;"></div><div style="left:500px;top:482px;width:100px;height:13px;background:#fff;"></div><div style="left:500px;top:494px;width:100px;height:1px;background:#5a5a5a;"></div><div style="left:599px;top:482px;width:1px;height:13px;background:#8a8a8a;"></div><span class="t" style="left:502px;top:482px;width:96px">&lt;&lt;--- attach ---<svg width="96" height="13"><use href="#a60" x="0"/><use href="#a60" x="6"/><use href="#a45" x="12"/><use href="#a45" x="18"/><use href="#a45" x="24"/><use href="#a97" x="36"/><use href="#a116" x="42"/><use href="#a116" x="48"/><use href="#a97" x="54"/><use href="#a99" x="60"/><use href="#a104" x="66"/><use href="#a45" x="78"/><use href="#a45" x="84"/><use href="#a45" x="90"/></svg></span><div style="left:499px;top:500px;width:8px;height:8px;background:#c4c4c4;"></div><div style="left:499px;top:500px;width:8px;height:1px;background:#6e6e6e;"></div><div style="left:499px;top:500px;width:1px;height:8px;background:#6e6e6e;"></div><div style="left:499px;top:507px;width:8px;height:1px;background:#fff;"></div><div style="left:506px;top:500px;width:1px;height:8px;background:#fff;"></div><span class="t" style="left:509px;top:498px;width:30px">Title<svg width="30" height="13"><use href="#a84" x="0"/><use href="#a105" x="6"/><use href="#a116" x="12"/><use href="#a108" x="18"/><use href="#a101" x="24"/></svg></span><div style="left:499px;top:513px;width:8px;height:8px;background:#c4c4c4;"></div><div style="left:499px;top:513px;width:8px;height:1px;background:#6e6e6e;"></div><div style="left:499px;top:513px;width:1px;height:8px;background:#6e6e6e;"></div><div style="left:499px;top:520px;width:8px;height:1px;background:#fff;"></div><div style="left:506px;top:513px;width:1px;height:8px;background:#fff;"></div><span class="t" style="left:509px;top:511px;width:36px">Author<svg width="36" height="13"><use href="#a65" x="0"/><use href="#a117" x="6"/><use href="#a116" x="12"/><use href="#a104" x="18"/><use href="#a111" x="24"/><use href="#a114" x="30"/></svg></span><div style="left:499px;top:526px;width:8px;height:8px;background:#c4c4c4;"></div><div style="left:499px;top:526px;width:8px;height:1px;background:#6e6e6e;"></div><div style="left:499px;top:526px;width:1px;height:8px;background:#6e6e6e;"></div><div style="left:499px;top:533px;width:8px;height:1px;background:#fff;"></div><div style="left:506px;top:526px;width:1px;height:8px;background:#fff;"></div><span class="t" style="left:509px;top:524px;width:48px">Borrower<svg width="48" height="13"><use href="#a66" x="0"/><use href="#a111" x="6"/><use href="#a114" x="12"/><use href="#a114" x="18"/><use href="#a111" x="24"/><use href="#a119" x="30"/><use href="#a101" x="36"/><use href="#a114" x="42"/></svg></span><div style="left:499px;top:539px;width:8px;height:8px;background:#fff;"></div><div style="left:499px;top:546px;width:8px;height:1px;background:#6e6e6e;"></div><div style="left:506px;top:539px;width:1px;height:8px;background:#6e6e6e;"></div><span class="t" style="left:509px;top:537px;width:60px">Collection<svg width="60" height="13"><use href="#a67" x="0"/><use href="#a111" x="6"/><use href="#a108" x="12"/><use href="#a108" x="18"/><use href="#a101" x="24"/><use href="#a99" x="30"/><use href="#a116" x="36"/><use href="#a105" x="42"/><use href="#a111" x="48"/><use href="#a110" x="54"/></svg></span><div style="left:499px;top:552px;width:8px;height:8px;background:#fff;"></div><div style="left:499px;top:559px;width:8px;height:1px;background:#6e6e6e;"></div><div style="left:506px;top:552px;width:1px;height:8px;background:#6e6e6e;"></div><span class="t" style="left:509px;top:550px;width:36px">Number<svg width="36" height="13"><use href="#a78" x="0"/><use href="#a117" x="6"/><use href="#a109" x="12"/><use href="#a98" x="18"/><use href="#a101" x="24"/><use href="#a114" x="30"/></svg></span><div style="left:499px;top:565px;width:8px;height:8px;background:#fff;"></div><div style="left:499px;top:572px;width:8px;height:1px;background:#6e6e6e;"></div><div style="left:506px;top:565px;width:1px;height:8px;background:#6e6e6e;"></div><span class="t" style="left:509px;top:563px;width:24px">Rate<svg width="24" height="13"><use href="#a82" x="0"/><use href="#a97" x="6"/><use href="#a116" x="12"/><use href="#a101" x="18"/></svg></span><div style="left:499px;top:580px;width:8px;height:8px;background:#fff;"></div><div style="left:499px;top:587px;width:8px;height:1px;background:#6e6e6e;"></div><div style="left:506px;top:580px;width:1px;height:8px;background:#6e6e6e;"></div><span class="t" style="left:509px;top:578px;width:72px">Debug window<svg width="72" height="13"><use href="#a68" x="0"/><use href="#a101" x="6"/><use href="#a98" x="12"/><use href="#a117" x="18"/><use href="#a103" x="24"/><use href="#a119" x="36"/><use href="#a105" x="42"/><use href="#a110" x="48"/><use href="#a100" x="54"/><use href="#a111" x="60"/><use href="#a119" x="66"/></svg></span></div>
</div>
</body></html>
